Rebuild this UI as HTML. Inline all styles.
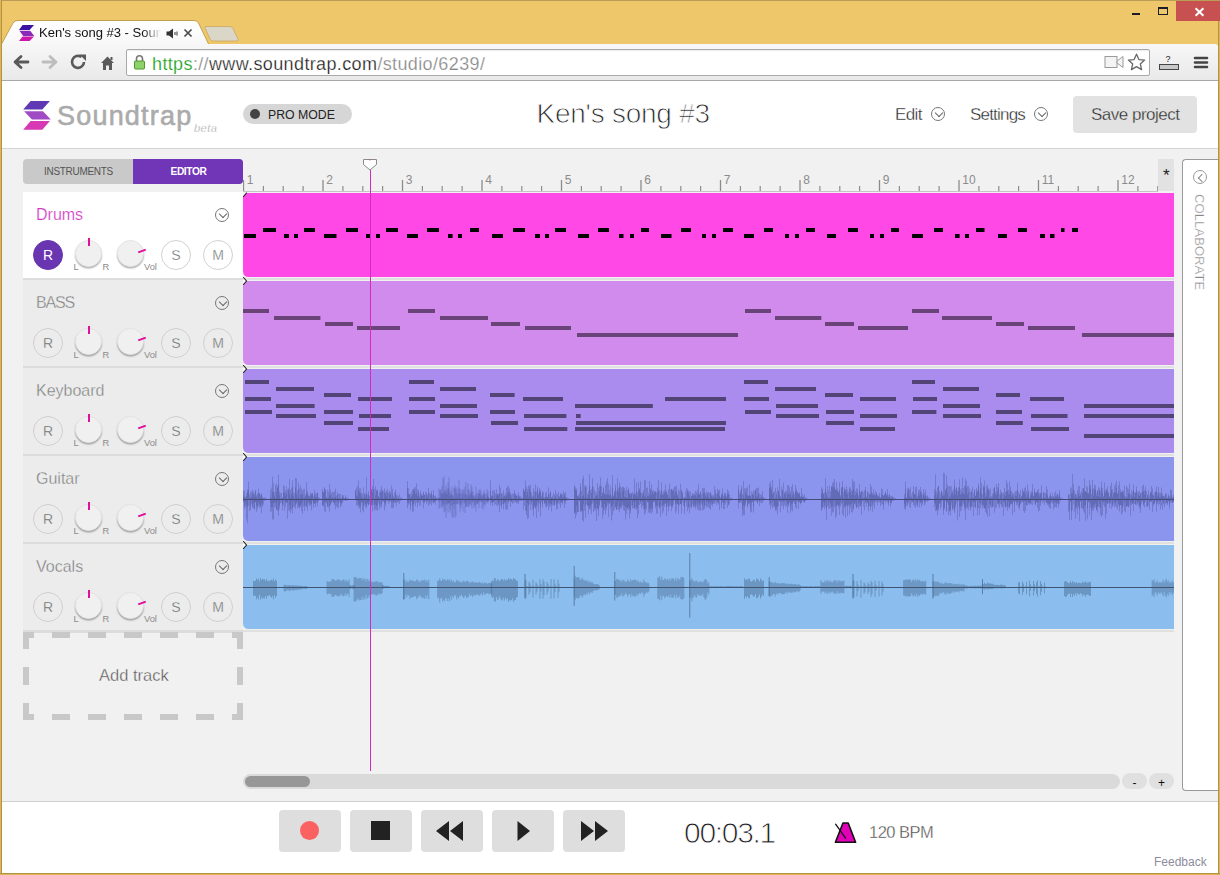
<!DOCTYPE html>
<html><head><meta charset="utf-8">
<style>
*{box-sizing:border-box;margin:0;padding:0}
html,body{width:1220px;height:875px;overflow:hidden}
body{position:relative;background:#efc76b;font-family:"Liberation Sans",sans-serif;color:#333}
.abs{position:absolute}
#topline{left:0;top:0;width:1220px;height:1px;background:#b99c55}
#lb{left:0;top:0;width:2px;height:875px;background:linear-gradient(90deg,#dcb45c 50%,#b4943f 50%)}
/* window controls */
#close{left:1176px;top:1px;width:44px;height:20px;background:#c75050}
#min{left:1132px;top:13px;width:8px;height:2px;background:#1c1c28}
#max{left:1158px;top:7px;width:10px;height:8px;border:1px solid #1c1c28;border-top-width:2px}
/* tabs */
#tab{left:0;top:20px}
#newtab{left:204px;top:25px}
#tabtitle{left:39px;top:25px;font-size:13px;color:#111;white-space:nowrap;width:122px;overflow:hidden}
#toolbar{left:2px;top:44px;width:1216px;height:37px;background:linear-gradient(#f7f7f7,#e9e9e9);border-bottom:1px solid #a8a8a8;border-top-right-radius:3px}
#omni{left:126px;top:49px;width:1024px;height:27px;background:#fff;border:1px solid #a9a9a9;border-radius:2px;box-shadow:inset 0 1px 1px rgba(0,0,0,.08)}
#url{left:152px;top:54px;font-size:18px;letter-spacing:0.37px;white-space:nowrap;color:#1a1a1a;-webkit-text-stroke:.25px #fff}
#url .g{color:#109a10}
#url .l{color:#858585}
/* content */
#content{left:2px;top:81px;width:1216px;height:792px;background:#f1f1f1}
#header{left:2px;top:81px;width:1216px;height:68px;background:#fff;border-bottom:1px solid #d4d4d4}
#brand{left:57px;top:101px;font-size:27px;color:#ababab;letter-spacing:1.2px;-webkit-text-stroke:0.6px #ababab}
#beta{left:194px;top:122px;font-size:11px;font-style:italic;color:#999;letter-spacing:.45px;-webkit-text-stroke:.3px #fff}
#pro{left:243px;top:104px;width:109px;height:20px;background:#d6d6d6;border-radius:10px}
#pro .dot{position:absolute;left:7px;top:5px;width:10px;height:10px;border-radius:50%;background:#444}
#pro .t{position:absolute;left:25px;top:4px;font-size:12.3px;color:#222;white-space:nowrap}
#title{left:536.5px;top:98px;font-size:28px;color:#222;white-space:nowrap;letter-spacing:-.25px;-webkit-text-stroke:0.9px #fff}
.hmenu{font-size:17px;color:#222;white-space:nowrap;top:105px;-webkit-text-stroke:0.35px #fff}
.chev{position:absolute;width:14px;height:14px;border:1px solid #777;border-radius:50%}
.chev:after{content:"";position:absolute;left:3.5px;top:2px;width:5px;height:5px;border-right:1px solid #666;border-bottom:1px solid #666;transform:rotate(45deg)}
#save{left:1073px;top:96px;width:124px;height:37px;background:#e2e2e2;border-radius:4px}
#save span{position:absolute;left:18px;top:8.5px;font-size:17px;color:#222;white-space:nowrap;letter-spacing:-.5px;-webkit-text-stroke:0.35px #e2e2e2}
/* sidebar tabs */
#stabs{left:23px;top:159px;width:220px;height:25px;border-radius:4px;overflow:hidden;background:#c9c9c9}
#stabs .ed{position:absolute;left:110px;top:0;width:110px;height:25px;background:#7135b8}
#stabs .t1{position:absolute;left:21px;top:7px;font-size:10px;color:#555;letter-spacing:-.3px;white-space:nowrap}
#stabs .t2{position:absolute;left:37.5px;top:7px;font-size:10.2px;color:#fff;font-weight:bold;white-space:nowrap;letter-spacing:-.4px}
/* track headers */
.th{position:absolute;left:23px;width:220px;height:85px;background:#ececec}
.th.sel{background:#fff}
.sep{position:absolute;left:23px;width:220px;height:3px;background:#dcdcdc}
.th .name{position:absolute;left:13px;top:14px;font-size:16px;color:#7a7a7a;white-space:nowrap;-webkit-text-stroke:.35px #ececec}
.th.sel .name{-webkit-text-stroke:.2px #fff}
.th.sel .name{color:#d23ac6}
.th .chev{left:192px;top:16px}
.btn{position:absolute;top:48px;width:30px;height:30px;border-radius:50%;border:1px solid #d0d0d0;text-align:center;font-size:14px;line-height:28px;color:#5e5e5e}
.btn.rec{left:10px}
.th .btn{-webkit-text-stroke:.35px #ececec}
.th.sel .btn{-webkit-text-stroke-color:#fff}
.th.sel .btn.rec{-webkit-text-stroke:0}
.btn.s{left:138px}
.btn.m{left:180px}
.sel .btn.rec{background:#6a35b0;border-color:#6a35b0;color:#fff}
.knob{position:absolute;top:48px;width:27px;height:27px;border-radius:50%;background:#f0f0f0;border:1px solid #e4e4e4;box-shadow:0 1.5px 1.5px rgba(0,0,0,.3)}
.knob.pan{left:52px}
.knob.vol{left:94px}
.tick{position:absolute;width:2px;height:8px;background:#e0109c}
.lab{position:absolute;font-size:9.3px;color:#8a8a8a}
/* clips */
.clip{position:absolute;left:243px;width:931px;height:84px;border-radius:0 0 0 8px;overflow:hidden}
.clip svg{position:absolute;left:0;top:0}
.marker{position:absolute;left:242px}
/* ruler */
#ruler{left:243px;top:159px}
#star{left:1158px;top:159px;width:16px;height:32px;background:#e2e2e2}
#star span{position:absolute;left:5px;top:7px;font-size:17px;color:#222}
/* collaborate */
#collab{left:1182px;top:159px;width:38px;height:632px;background:#fff;border:1px solid #9a9a9a;border-right:none;border-radius:4px 0 0 4px}
#collab .c{position:absolute;left:10px;top:10px;width:14px;height:14px;border:1px solid #999;border-radius:50%}
#collab .c:after{content:"";position:absolute;left:4.5px;top:3.5px;width:5px;height:5px;border-left:1px solid #888;border-bottom:1px solid #888;transform:rotate(45deg)}
#collab .v{position:absolute;left:24px;top:34px;font-size:13px;color:#888;-webkit-text-stroke:.3px #fff;white-space:nowrap;transform-origin:0 0;transform:rotate(90deg);letter-spacing:.1px}
/* add track */
#addt{left:99px;top:666px;font-size:16.5px;color:#555;white-space:nowrap;-webkit-text-stroke:.35px #f1f1f1}
/* scrollbar */
#sbar{left:243px;top:774px;width:877px;height:15px;background:#dadada;border-radius:8px}
#thumb{left:245px;top:776px;width:65px;height:11px;background:#979797;border-radius:6px}
.zb{position:absolute;top:773px;width:25px;height:16px;background:#e0e0e0;border-radius:8px;font-size:12px;text-align:center;line-height:20px;color:#111}
#playline{left:370px;top:169px;width:1px;height:602px;background:#d42bbf}
#phead{left:363px;top:159px}
/* footer */
#footer{left:2px;top:801px;width:1216px;height:72px;background:#fff;border-top:1px solid #cfcfcf}
.tb{position:absolute;top:810px;width:62px;height:42px;background:#dedede;border-radius:4px}
#time{left:684px;top:815.5px;font-size:30px;color:#1a1a1a;letter-spacing:-1.3px;white-space:nowrap;-webkit-text-stroke:0.9px #fff}
#bpm{left:869px;top:823px;font-size:16.5px;color:#444;letter-spacing:-.5px;white-space:nowrap;-webkit-text-stroke:.35px #fff}
#feedback{left:1154px;top:855px;font-size:12px;color:#8c8c9c;white-space:nowrap}
#rb{left:1218px;top:21px;width:2px;height:854px;background:linear-gradient(90deg,#b4943f 50%,#dcb45c 50%)}
#bb{left:0;top:873px;width:1220px;height:2px;background:linear-gradient(#b4943f 50%,#dcb45c 50%)}
</style></head><body>
<div class="abs" id="topline"></div>
<div class="abs" id="close"><svg width="44" height="20" style="position:absolute;left:0;top:0"><path d="M19.6 7.2L27.4 14.8M27.4 7.2L19.6 14.8" stroke="#fff" stroke-width="2"/></svg></div>
<div class="abs" id="min"></div>
<div class="abs" id="max"></div>

<svg class="abs" id="tab" width="215" height="25"><defs><linearGradient id="tg" x1="0" y1="0" x2="0" y2="1"><stop offset="0" stop-color="#fff"/><stop offset="1" stop-color="#f7f7f7"/></linearGradient></defs><path d="M1 25 L13 3 Q14.5 0.5 18 0.5 L194 0.5 Q197 0.5 198.5 3 L209 25 Z" fill="url(#tg)" stroke="#c29f4e" stroke-width="1"/></svg>
<svg class="abs" id="newtab" width="36" height="18"><path d="M2 1.5 L26 1.5 Q28 1.5 29 3.5 L34 14 Q35 16 33 16 L9 16 Q7 16 6 14 L1 3 Q0.5 1.5 2 1.5Z" fill="#dbd7c8" stroke="#c9a65a" stroke-width="0.8"/></svg>
<div class="abs" id="toolbar"></div>
<svg class="abs" style="left:18px;top:24px" width="18" height="18"><path d="M4.6 1H16L11.6 5.9H1Z" fill="#3c12a4"/><path d="M1.4 6.8H12.2L16.2 11.9H5.2Z" fill="#8a2ab8"/><path d="M4.6 12.6H16L11.6 17H1Z" fill="#cc16ac"/></svg>
<div class="abs" id="tabtitle" style="-webkit-mask-image:linear-gradient(90deg,#000 85%,transparent)">Ken's song #3 - Soundtrap</div>
<svg class="abs" style="left:166px;top:28px" width="12" height="11"><path d="M0.5 3.5H3L7 0.5V10.5L3 7.5H0.5Z" fill="#333"/><path d="M9 4V7M11 3.5V7.5" stroke="#333" stroke-width="1"/></svg>
<svg class="abs" style="left:183px;top:28px" width="10" height="10"><path d="M1.5 1.5L8.5 8.5M8.5 1.5L1.5 8.5" stroke="#4a4a4a" stroke-width="1.7"/></svg>

<div class="abs" id="omni"></div>
<!-- nav icons -->
<svg class="abs" style="left:11px;top:53px" width="20" height="18"><path d="M17 9H5M10 3.5L4 9L10 14.5" stroke="#595959" stroke-width="2.8" fill="none" stroke-linecap="round" stroke-linejoin="round"/></svg>
<svg class="abs" style="left:40px;top:53px" width="20" height="18"><path d="M3 9H15M10 3.5L16 9L10 14.5" stroke="#bdbdbd" stroke-width="2.8" fill="none" stroke-linecap="round" stroke-linejoin="round"/></svg>
<svg class="abs" style="left:69px;top:53px" width="20" height="18"><path d="M15 9A6 6 0 1 1 12.5 4" stroke="#595959" stroke-width="2.6" fill="none"/><path d="M10.5 1.5L17 1.5L17 8Z" fill="#595959"/></svg>
<svg class="abs" style="left:99px;top:54px" width="18" height="17"><path d="M2 9L8.5 2.5L15 9H13V16H10V11.5H7V16H4V9Z" fill="#595959"/><path d="M12.5 3V6" stroke="#595959" stroke-width="2"/></svg>
<svg class="abs" style="left:133px;top:54px" width="13" height="16"><path d="M3.5 7V4.8A3 3 0 0 1 9.5 4.8V7" stroke="#777" stroke-width="1.6" fill="none"/><rect x="1.5" y="7" width="10" height="8" rx="1" fill="#8fd16a" stroke="#4e9a2e" stroke-width="1"/></svg>
<div class="abs" id="url"><span class="g">https</span><span class="l">://</span>www.soundtrap.com<span class="l">/studio/6239/</span></div>
<svg class="abs" style="left:1104px;top:55px" width="21" height="14"><rect x="1" y="1.5" width="12" height="11" fill="#f4f4f4" stroke="#9a9a9a"/><path d="M13 6L19 1.5V12.5L13 8Z" fill="#f4f4f4" stroke="#9a9a9a"/></svg>
<svg class="abs" style="left:1127px;top:53px" width="20" height="19"><path d="M9.5 1.2L11.9 6.6L17.6 7.1L13.3 10.9L14.6 16.6L9.5 13.6L4.4 16.6L5.7 10.9L1.4 7.1L7.1 6.6Z" fill="#fff" stroke="#666" stroke-width="1.3" stroke-linejoin="round"/></svg>
<svg class="abs" style="left:1157px;top:53px" width="24" height="19"><text x="8.5" y="9" font-size="9" font-family="Liberation Sans" fill="#222">?</text><rect x="2.5" y="11.5" width="19" height="5" fill="#c9c9c9" stroke="#444"/></svg>
<svg class="abs" style="left:1193px;top:55px" width="16" height="15"><path d="M2 3H14M2 7.5H14M2 12H14" stroke="#444" stroke-width="2.6" stroke-linecap="round"/></svg>

<div class="abs" id="content"></div>
<div class="abs" id="header"></div>
<svg class="abs" style="left:23px;top:100px" width="30" height="31"><path d="M7.6 1.1H26.9L19.3 9.6H0.2Z" fill="#6038b4"/><path d="M1.1 11.2H20L27.8 19.6H8.9Z" fill="#a04bc4"/><path d="M7.6 21.1H26.9L19.3 29.7H0.2Z" fill="#d838b4"/></svg>
<div class="abs" id="brand">Soundtrap</div>
<div class="abs" id="beta">beta</div>
<div class="abs" id="pro"><div class="dot"></div><div class="t">PRO MODE</div></div>
<div class="abs" id="title">Ken's song #3</div>
<div class="abs hmenu" style="left:895px;letter-spacing:-.6px">Edit</div>
<div class="chev" style="left:931px;top:107px"></div>
<div class="abs hmenu" style="left:970px;letter-spacing:-.8px">Settings</div>
<div class="chev" style="left:1034px;top:107px"></div>
<div class="abs" id="save"><span>Save project</span></div>

<div class="abs" id="stabs"><div class="t1">INSTRUMENTS</div><div class="ed"><div class="t2">EDITOR</div></div></div>

<div class="th sel" style="top:192px;height:86px">
<div class="name">Drums</div><div class="chev"></div>
<div class="btn rec">R</div>
<div class="knob pan"></div><div class="tick" style="left:65px;top:46px"></div>
<div class="lab" style="left:50.5px;top:70px">L</div><div class="lab" style="left:79.5px;top:70px">R</div>
<div class="knob vol"></div><div class="tick" style="left:118px;top:55px;transform:rotate(70deg)"></div>
<div class="lab" style="left:121px;top:70px">Vol</div>
<div class="btn s">S</div><div class="btn m">M</div>
</div>
<div class="sep" style="top:278px;height:3px"></div><div class="abs" style="left:243px;top:277px;width:931px;height:4px;background:#e0e0e0;border-top:1px solid #eef1ee;border-bottom:1px solid #eef1ee"></div>
<svg class="abs" style="left:242px;top:188px" width="932" height="89"><path d="M1 9 L4.5 5 H932 V89 H7 Q1 89 1 83 Z" fill="#ff48e6"/></svg>
<div class="clip" style="top:193px;background:transparent"><svg class="notes" width="931" height="84" fill="#000"><rect x="1.0" y="41" width="12.0" height="4"/><rect x="41.0" y="41" width="5.0" height="4"/><rect x="51.0" y="41" width="4.0" height="4"/><rect x="81.0" y="41" width="12.5" height="4"/><rect x="123.0" y="41" width="4.5" height="4"/><rect x="133.0" y="41" width="4.0" height="4"/><rect x="164.0" y="41" width="11.0" height="4"/><rect x="205.0" y="41" width="4.6" height="4"/><rect x="215.0" y="41" width="4.0" height="4"/><rect x="249.0" y="41" width="11.0" height="4"/><rect x="292.0" y="41" width="5.0" height="4"/><rect x="302.0" y="41" width="4.0" height="4"/><rect x="335.0" y="41" width="11.0" height="4"/><rect x="376.0" y="41" width="4.5" height="4"/><rect x="387.0" y="41" width="4.0" height="4"/><rect x="418.0" y="41" width="10.5" height="4"/><rect x="459.0" y="41" width="4.0" height="4"/><rect x="469.0" y="41" width="4.0" height="4"/><rect x="501.0" y="41" width="10.0" height="4"/><rect x="542.0" y="41" width="4.0" height="4"/><rect x="552.0" y="41" width="4.0" height="4"/><rect x="584.0" y="41" width="9.0" height="4"/><rect x="627.0" y="41" width="4.0" height="4"/><rect x="637.0" y="41" width="4.0" height="4"/><rect x="669.0" y="41" width="11.0" height="4"/><rect x="712.0" y="41" width="4.6" height="4"/><rect x="722.0" y="41" width="4.0" height="4"/><rect x="755.0" y="41" width="9.0" height="4"/><rect x="797.0" y="41" width="5.0" height="4"/><rect x="807.0" y="41" width="4.5" height="4"/><rect x="20.0" y="35" width="13.0" height="4"/><rect x="61.0" y="35" width="11.0" height="4"/><rect x="103.0" y="35" width="12.0" height="4"/><rect x="143.0" y="35" width="12.0" height="4"/><rect x="184.0" y="35" width="12.0" height="4"/><rect x="227.0" y="35" width="9.0" height="4"/><rect x="270.0" y="35" width="12.0" height="4"/><rect x="312.0" y="35" width="11.0" height="4"/><rect x="355.0" y="35" width="11.0" height="4"/><rect x="398.0" y="35" width="8.0" height="4"/><rect x="438.0" y="35" width="10.0" height="4"/><rect x="480.0" y="35" width="10.0" height="4"/><rect x="521.0" y="35" width="9.0" height="4"/><rect x="563.0" y="35" width="9.0" height="4"/><rect x="605.0" y="35" width="10.0" height="4"/><rect x="648.0" y="35" width="8.0" height="4"/><rect x="691.0" y="35" width="9.0" height="4"/><rect x="733.0" y="35" width="8.5" height="4"/><rect x="775.0" y="35" width="9.0" height="4"/><rect x="818.0" y="35" width="3.5" height="4"/><rect x="829.0" y="35" width="6.0" height="4"/></svg></div>
<svg class="abs" style="left:241px;top:188px" width="8" height="10"><path d="M5.5 5L2.5 8.5" stroke="#1a1a1a" stroke-width="1.1" fill="#fff" stroke-linecap="round"/></svg>
<div class="th" style="top:280px;height:86px">
<div class="name" style="letter-spacing:-1.2px">BASS</div><div class="chev"></div>
<div class="btn rec">R</div>
<div class="knob pan"></div><div class="tick" style="left:65px;top:46px"></div>
<div class="lab" style="left:50.5px;top:70px">L</div><div class="lab" style="left:79.5px;top:70px">R</div>
<div class="knob vol"></div><div class="tick" style="left:118px;top:55px;transform:rotate(70deg)"></div>
<div class="lab" style="left:121px;top:70px">Vol</div>
<div class="btn s">S</div><div class="btn m">M</div>
</div>
<div class="sep" style="top:366px;height:3px"></div><div class="abs" style="left:243px;top:365px;width:931px;height:4px;background:#e0e0e0;border-top:1px solid #eef1ee;border-bottom:1px solid #eef1ee"></div>
<svg class="abs" style="left:242px;top:276px" width="932" height="89"><path d="M1 9 L4.5 5 H932 V89 H7 Q1 89 1 83 Z" fill="#d18bec"/></svg>
<div class="clip" style="top:281px;background:transparent"><svg class="notes" width="931" height="84" fill="#6a4479"><rect x="0.0" y="28" width="26.0" height="4"/><rect x="31.0" y="35" width="46.4" height="4"/><rect x="82.0" y="41" width="28.0" height="4"/><rect x="114.0" y="45" width="43.0" height="4"/><rect x="165.0" y="28" width="27.0" height="4"/><rect x="197.0" y="35" width="48.0" height="4"/><rect x="248.0" y="41" width="29.0" height="4"/><rect x="282.0" y="45" width="46.0" height="4"/><rect x="334.0" y="52" width="161.0" height="4"/><rect x="502.0" y="28" width="26.0" height="4"/><rect x="532.0" y="35" width="46.3" height="4"/><rect x="582.0" y="41" width="29.0" height="4"/><rect x="615.0" y="45" width="50.0" height="4"/><rect x="669.0" y="28" width="27.0" height="4"/><rect x="699.0" y="35" width="50.0" height="4"/><rect x="753.0" y="41" width="28.0" height="4"/><rect x="785.0" y="45" width="47.0" height="4"/><rect x="839.0" y="52" width="92.0" height="4"/></svg></div>
<svg class="abs" style="left:241px;top:276px" width="8" height="10"><path d="M2.5 1.5L5.5 5L2.5 8.5" stroke="#1a1a1a" stroke-width="1.1" fill="#fff" stroke-linecap="round"/></svg>
<div class="th" style="top:368px;height:86px">
<div class="name">Keyboard</div><div class="chev"></div>
<div class="btn rec">R</div>
<div class="knob pan"></div><div class="tick" style="left:65px;top:46px"></div>
<div class="lab" style="left:50.5px;top:70px">L</div><div class="lab" style="left:79.5px;top:70px">R</div>
<div class="knob vol"></div><div class="tick" style="left:118px;top:55px;transform:rotate(70deg)"></div>
<div class="lab" style="left:121px;top:70px">Vol</div>
<div class="btn s">S</div><div class="btn m">M</div>
</div>
<div class="sep" style="top:454px;height:3px"></div><div class="abs" style="left:243px;top:453px;width:931px;height:4px;background:#e0e0e0;border-top:1px solid #eef1ee;border-bottom:1px solid #eef1ee"></div>
<svg class="abs" style="left:242px;top:364px" width="932" height="89"><path d="M1 9 L4.5 5 H932 V89 H7 Q1 89 1 83 Z" fill="#a98cee"/></svg>
<div class="clip" style="top:369px;background:transparent"><svg class="notes" width="931" height="84" fill="#524476"><rect x="2.0" y="11" width="24.0" height="4"/><rect x="2.0" y="28" width="26.0" height="4"/><rect x="2.0" y="41" width="27.0" height="4"/><rect x="33.0" y="18" width="38.0" height="4"/><rect x="33.0" y="35" width="38.6" height="4"/><rect x="33.0" y="45" width="40.0" height="4"/><rect x="81.0" y="24" width="27.0" height="4"/><rect x="81.0" y="41" width="29.0" height="4"/><rect x="81.0" y="52" width="29.0" height="4"/><rect x="115.0" y="28" width="34.0" height="4"/><rect x="116.0" y="45" width="32.0" height="4"/><rect x="115.0" y="58" width="31.0" height="4"/><rect x="166.0" y="11" width="25.0" height="4"/><rect x="166.0" y="28" width="26.0" height="4"/><rect x="166.0" y="41" width="26.0" height="4"/><rect x="197.0" y="18" width="36.0" height="4"/><rect x="197.0" y="35" width="37.0" height="4"/><rect x="197.0" y="45" width="38.0" height="4"/><rect x="247.0" y="24" width="24.6" height="4"/><rect x="247.0" y="41" width="25.0" height="4"/><rect x="248.0" y="52" width="27.0" height="4"/><rect x="280.0" y="28" width="40.0" height="4"/><rect x="281.0" y="45" width="42.4" height="4"/><rect x="281.0" y="58" width="43.3" height="4"/><rect x="332.0" y="35" width="77.8" height="4"/><rect x="333.0" y="45" width="4.7" height="4"/><rect x="333.0" y="52" width="150.0" height="4"/><rect x="332.0" y="58" width="150.0" height="4"/><rect x="422.0" y="28" width="61.0" height="4"/><rect x="501.0" y="11" width="24.0" height="4"/><rect x="501.0" y="28" width="25.0" height="4"/><rect x="502.0" y="41" width="26.0" height="4"/><rect x="532.0" y="18" width="41.0" height="4"/><rect x="533.0" y="35" width="42.0" height="4"/><rect x="533.0" y="45" width="43.0" height="4"/><rect x="582.0" y="24" width="28.0" height="4"/><rect x="583.0" y="41" width="28.0" height="4"/><rect x="583.0" y="52" width="28.0" height="4"/><rect x="617.0" y="28" width="36.0" height="4"/><rect x="617.0" y="45" width="37.0" height="4"/><rect x="617.0" y="58" width="35.0" height="4"/><rect x="669.0" y="11" width="23.0" height="4"/><rect x="670.0" y="28" width="24.0" height="4"/><rect x="669.0" y="41" width="24.4" height="4"/><rect x="700.0" y="18" width="36.0" height="4"/><rect x="700.0" y="35" width="37.0" height="4"/><rect x="700.0" y="45" width="38.0" height="4"/><rect x="753.0" y="24" width="24.0" height="4"/><rect x="753.0" y="41" width="26.0" height="4"/><rect x="753.0" y="52" width="26.8" height="4"/><rect x="787.0" y="28" width="34.0" height="4"/><rect x="788.0" y="45" width="36.5" height="4"/><rect x="788.0" y="58" width="38.0" height="4"/><rect x="841.0" y="35" width="90.0" height="4"/><rect x="841.0" y="45" width="90.0" height="4"/><rect x="841.0" y="65" width="90.0" height="4"/></svg></div>
<svg class="abs" style="left:241px;top:364px" width="8" height="10"><path d="M2.5 1.5L5.5 5L2.5 8.5" stroke="#1a1a1a" stroke-width="1.1" fill="#fff" stroke-linecap="round"/></svg>
<div class="th" style="top:456px;height:86px">
<div class="name">Guitar</div><div class="chev"></div>
<div class="btn rec">R</div>
<div class="knob pan"></div><div class="tick" style="left:65px;top:46px"></div>
<div class="lab" style="left:50.5px;top:70px">L</div><div class="lab" style="left:79.5px;top:70px">R</div>
<div class="knob vol"></div><div class="tick" style="left:118px;top:55px;transform:rotate(70deg)"></div>
<div class="lab" style="left:121px;top:70px">Vol</div>
<div class="btn s">S</div><div class="btn m">M</div>
</div>
<div class="sep" style="top:542px;height:3px"></div><div class="abs" style="left:243px;top:541px;width:931px;height:4px;background:#e0e0e0;border-top:1px solid #eef1ee;border-bottom:1px solid #eef1ee"></div>
<svg class="abs" style="left:242px;top:452px" width="932" height="89"><path d="M1 9 L4.5 5 H932 V89 H7 Q1 89 1 83 Z" fill="#8b95ee"/></svg>
<div class="clip" style="top:457px;background:transparent"><svg class="notes" width="931" height="84"><path d="M0.5 37.9V44.0M1.5 33.7V48.8M2.5 41.8V50.4M3.5 36.3V62.4M4.5 32.3V66.2M5.5 24.5V42.3M6.5 40.8V43.2M7.5 40.4V53.2M8.5 34.9V42.5M9.5 32.7V48.8M10.5 36.9V46.0M11.5 39.9V51.5M12.5 32.9V45.5M13.5 38.0V54.9M14.5 41.9V52.3M15.5 31.8V45.4M16.5 36.6V47.4M17.5 38.2V50.6M18.5 36.5V56.1M19.5 39.5V49.5M20.5 41.3V42.6M27.5 40.3V45.5M28.5 41.1V50.1M29.5 19.5V62.2M30.5 35.0V62.7M31.5 39.4V45.2M32.5 28.2V45.7M33.5 34.9V52.8M34.5 30.7V54.1M35.5 17.6V58.6M36.5 34.5V48.4M37.5 41.4V42.5M38.5 36.0V42.4M39.5 40.9V47.5M40.5 28.5V43.5M41.5 35.6V43.2M42.5 33.1V49.9M43.5 36.3V45.3M44.5 41.9V61.7M45.5 31.4V42.1M46.5 22.0V54.3M47.5 40.0V56.1M48.5 37.0V44.4M49.5 23.2V56.5M50.5 39.1V49.7M51.5 41.8V45.2M52.5 21.1V48.0M53.5 21.5V46.4M54.5 39.8V43.9M55.5 25.5V48.3M56.5 41.3V51.6M57.5 28.5V48.0M58.5 37.8V54.1M59.5 36.6V57.0M60.5 40.9V43.1M61.5 40.7V53.8M62.5 37.8V48.5M63.5 25.1V50.0M64.5 36.7V53.8M65.5 39.6V44.5M66.5 39.5V46.0M67.5 38.3V46.4M68.5 37.4V53.3M69.5 36.0V42.0M70.5 42.0V50.8M71.5 33.1V47.1M72.5 36.1V50.0M73.5 40.2V43.8M74.5 36.4V49.1M79.5 31.9V47.8M80.5 35.5V48.2M81.5 30.2V54.2M82.5 33.5V55.3M83.5 41.0V46.5M84.5 41.5V49.9M85.5 40.7V50.5M86.5 27.2V54.6M87.5 37.3V46.7M88.5 40.7V45.8M89.5 40.4V44.4M90.5 35.2V45.7M91.5 34.2V46.4M92.5 31.5V52.5M93.5 41.8V49.4M94.5 38.0V50.9M95.5 41.1V50.6M96.5 41.6V42.2M97.5 41.7V50.1M98.5 41.7V48.7M99.5 38.5V43.7M100.5 40.4V42.4M101.5 41.6V42.5M102.5 40.3V43.2M112.5 32.5V43.6M113.5 38.4V42.1M114.5 39.6V48.3M115.5 23.4V47.5M116.5 35.4V48.8M117.5 36.6V55.4M118.5 35.3V45.9M119.5 41.4V53.2M120.5 41.3V55.2M121.5 38.1V44.3M122.5 40.3V47.3M123.5 20.3V49.0M124.5 37.7V45.8M125.5 34.2V48.1M126.5 42.0V44.4M127.5 41.7V42.1M128.5 32.0V48.2M129.5 29.0V54.5M130.5 22.0V43.0M131.5 41.7V53.3M132.5 29.2V52.6M133.5 34.5V52.9M134.5 33.0V53.7M135.5 39.6V42.1M136.5 41.2V52.3M137.5 32.6V49.6M138.5 29.1V50.5M139.5 32.4V42.3M140.5 41.6V43.9M141.5 31.2V53.5M142.5 36.2V48.8M143.5 33.5V42.3M144.5 31.9V44.1M145.5 41.7V43.7M146.5 33.6V43.9M147.5 37.1V42.5M148.5 28.6V51.0M149.5 31.9V51.2M150.5 40.5V50.6M151.5 41.2V45.7M152.5 32.8V45.4M153.5 40.5V49.2M154.5 42.0V45.0M155.5 41.3V43.8M156.5 42.0V47.0M164.5 24.0V51.3M165.5 37.0V46.0M166.5 37.3V46.5M167.5 41.2V53.3M168.5 39.3V44.2M169.5 37.3V55.2M170.5 32.3V54.2M171.5 30.6V42.2M172.5 30.1V49.2M173.5 26.4V42.7M174.5 38.9V50.3M175.5 32.8V44.3M176.5 40.7V42.9M177.5 36.1V43.4M178.5 37.0V42.7M179.5 38.7V42.4M180.5 35.4V51.2M181.5 37.9V46.3M182.5 41.7V43.7M183.5 37.0V47.1M184.5 40.0V43.3M185.5 30.7V49.2M186.5 41.9V47.4M187.5 36.7V42.0M188.5 33.9V48.4M189.5 41.5V42.6M190.5 33.2V46.6M191.5 39.0V45.0M192.5 40.9V47.7M196.0 40.6V45.2M197.0 40.8V42.5M198.0 35.4V44.7M199.0 37.4V49.3M200.0 21.5V49.6M201.0 19.1V55.1M202.0 32.9V54.2M203.0 28.5V60.8M204.0 36.8V48.2M205.0 25.0V55.5M206.0 19.9V46.0M207.0 39.2V55.7M208.0 33.5V43.9M209.0 29.4V60.3M210.0 39.5V60.7M211.0 41.6V47.2M212.0 28.1V60.9M213.0 40.0V59.0M214.0 30.2V46.7M215.0 40.3V42.0M216.0 22.9V43.0M217.0 37.3V55.4M218.0 41.7V48.1M219.0 40.1V46.2M220.0 36.5V54.5M221.0 41.8V42.3M222.0 29.7V56.0M223.0 25.0V50.1M224.0 38.4V44.6M225.0 26.6V50.1M226.0 39.8V47.3M227.0 37.6V44.1M228.0 27.2V43.3M229.0 29.8V51.8M230.0 38.8V45.3M231.0 40.4V51.1M232.0 41.9V47.7M233.0 29.7V54.6M234.0 41.5V46.7M235.0 40.2V45.6M236.0 33.0V51.4M237.0 31.7V44.1M238.0 33.7V43.2M239.0 41.1V51.2M240.0 38.7V52.4M241.0 33.4V47.6M242.0 38.0V49.5M243.0 41.9V43.7M244.0 32.0V46.3M245.0 33.8V44.9M247.5 23.5V42.6M248.5 39.7V45.7M249.5 39.1V49.2M250.5 42.0V45.0M251.5 38.2V43.5M252.5 41.6V42.6M253.5 32.1V42.5M254.5 36.8V44.3M255.5 38.5V48.1M256.5 27.7V55.1M257.5 30.9V43.4M258.5 36.9V51.6M259.5 36.4V43.0M260.5 33.4V52.6M261.5 38.1V46.5M262.5 35.8V52.3M263.5 31.0V52.7M264.5 28.6V52.5M265.5 29.4V44.8M266.5 31.6V42.8M267.5 38.3V49.8M268.5 40.5V44.7M269.5 41.3V43.3M270.5 41.9V46.0M271.5 33.1V42.4M272.5 36.3V43.6M273.5 38.8V46.4M274.5 41.9V45.8M275.5 35.5V47.0M276.5 38.8V42.3M277.5 41.7V44.0M280.5 31.4V42.7M281.5 34.2V42.4M282.5 23.6V43.3M283.5 29.3V58.2M284.5 34.8V62.1M285.5 28.2V61.2M286.5 29.1V43.6M287.5 27.8V43.4M288.5 39.9V45.2M289.5 41.8V43.9M290.5 31.4V59.1M291.5 41.1V50.1M292.5 27.4V50.6M293.5 41.3V61.0M294.5 29.5V44.9M295.5 37.9V54.8M296.5 31.0V42.3M297.5 33.2V59.6M298.5 38.8V42.0M299.5 34.0V47.4M300.5 41.1V44.2M301.5 42.0V45.9M302.5 40.2V49.8M303.5 34.4V47.7M304.5 40.0V43.1M305.5 30.4V53.0M306.5 42.0V50.2M307.5 34.7V46.7M308.5 40.1V54.5M309.5 38.4V43.9M310.5 42.0V48.0M311.5 40.7V48.7M312.5 33.1V43.1M313.5 41.8V52.7M314.5 42.0V51.7M315.5 34.9V45.9M316.5 40.6V42.1M317.5 35.9V50.8M318.5 37.7V45.4M319.5 40.5V47.6M320.5 34.4V42.0M321.5 36.2V50.9M322.5 35.0V43.9M331.5 27.8V57.0M332.5 32.6V61.6M333.5 33.5V57.9M334.5 38.9V54.8M335.5 40.2V42.2M336.5 36.0V43.6M337.5 26.0V55.1M338.5 41.4V53.8M339.5 21.8V63.0M340.5 18.5V64.7M341.5 40.8V42.2M342.5 28.0V60.7M343.5 40.9V42.9M344.5 36.7V49.3M345.5 37.5V57.2M346.5 17.1V51.3M347.5 41.8V49.0M348.5 36.1V56.8M349.5 20.9V42.8M350.5 42.0V44.6M351.5 42.0V50.8M352.5 39.6V50.9M353.5 38.1V64.0M354.5 26.4V51.0M355.5 41.2V59.0M356.5 28.7V47.6M357.5 20.4V42.8M358.5 39.2V45.6M359.5 35.5V61.7M360.5 31.6V57.7M361.5 36.3V46.9M362.5 28.0V57.3M363.5 24.6V52.7M364.5 21.1V45.1M365.5 26.9V60.1M366.5 38.5V46.8M367.5 36.8V44.2M368.5 41.0V63.5M369.5 18.1V58.4M370.5 39.5V54.0M371.5 35.6V42.2M372.5 27.5V50.5M373.5 40.4V53.0M374.5 21.1V48.8M375.5 34.9V44.8M376.5 25.4V55.4M377.5 29.3V49.3M378.5 41.1V48.5M379.5 29.7V45.1M380.5 30.0V48.2M381.5 39.8V53.9M382.5 33.5V62.7M383.5 40.2V57.2M384.5 41.1V51.8M385.5 33.0V53.3M386.5 35.4V61.6M387.5 35.9V56.4M388.5 36.7V42.4M389.5 41.9V48.2M390.5 36.8V45.2M391.5 21.5V50.4M392.5 36.0V44.3M393.5 25.5V52.8M394.5 39.3V61.4M395.5 25.4V57.3M396.5 32.6V43.1M397.5 24.7V45.2M398.5 35.5V43.9M399.5 38.4V44.8M400.5 35.5V52.5M401.5 22.8V57.8M402.5 23.6V55.9M403.5 30.9V42.1M404.5 30.4V44.8M405.5 39.3V55.5M406.5 24.0V55.9M407.5 31.7V55.5M408.5 27.3V56.9M409.5 33.6V54.4M410.5 33.1V44.9M411.5 34.5V42.4M412.5 34.6V49.0M413.5 42.0V56.5M414.5 30.8V56.4M415.5 23.3V42.5M416.5 41.9V51.1M417.5 37.9V59.6M418.5 25.3V42.2M419.5 37.8V56.5M420.5 34.2V54.3M421.5 36.3V49.7M422.5 27.4V46.9M423.5 34.7V58.8M424.5 38.0V45.5M425.5 32.1V54.3M426.5 26.4V49.3M427.5 42.0V43.7M428.5 31.8V54.1M429.5 32.8V50.7M430.5 31.5V43.9M431.5 29.7V42.7M432.5 29.6V56.5M433.5 28.6V53.7M434.5 38.7V46.9M435.5 32.6V56.7M436.5 41.8V42.8M437.5 26.7V47.1M438.5 33.8V56.5M439.5 37.1V42.6M440.5 40.8V42.0M441.5 41.1V56.8M442.5 41.1V42.1M443.5 31.3V43.5M444.5 31.8V54.2M445.5 33.5V51.3M446.5 39.6V56.2M447.5 42.0V50.1M448.5 38.9V51.4M449.5 36.3V42.3M450.5 37.1V50.4M451.5 38.2V49.8M452.5 38.0V52.2M453.5 35.1V44.5M454.5 32.8V52.7M455.5 27.5V52.7M456.5 37.5V53.6M457.5 34.8V53.7M458.5 42.0V44.1M459.5 31.1V53.3M460.5 31.3V52.9M461.5 30.7V51.8M462.5 38.8V42.4M463.5 40.5V50.6M464.5 35.1V49.4M465.5 40.0V50.5M466.5 41.6V51.3M467.5 35.7V52.7M468.5 37.3V47.9M469.5 40.8V49.4M470.5 38.3V46.8M471.5 29.1V45.0M472.5 32.8V42.9M473.5 36.9V42.1M474.5 31.8V46.2M475.5 33.3V45.5M476.5 32.7V52.8M477.5 40.7V43.0M478.5 36.7V51.2M479.5 31.6V42.2M480.5 41.4V52.3M481.5 35.8V52.1M482.5 38.3V42.8M483.5 40.6V42.1M484.5 32.3V51.0M485.5 34.1V48.3M486.5 41.8V42.7M495.5 28.1V45.7M496.5 41.0V46.1M497.5 33.6V43.6M498.5 28.6V42.0M499.5 41.8V59.0M500.5 23.8V57.7M501.5 41.2V58.3M502.5 35.0V45.9M503.5 31.2V43.1M504.5 29.4V49.3M505.5 38.9V46.7M506.5 27.1V45.4M507.5 38.3V55.3M508.5 41.7V54.7M509.5 35.9V44.5M510.5 38.0V55.6M511.5 41.4V44.3M512.5 32.2V44.3M513.5 31.2V44.7M514.5 31.2V46.7M515.5 30.4V43.3M516.5 40.9V49.2M517.5 41.7V42.3M518.5 40.2V43.0M519.5 34.3V46.0M526.5 26.5V47.7M527.5 24.2V46.3M528.5 33.2V42.1M529.5 22.7V45.1M530.5 36.3V43.5M531.5 42.0V49.6M532.5 40.8V53.8M533.5 37.5V53.5M534.5 41.6V57.1M535.5 33.5V49.4M536.5 21.7V44.2M537.5 39.0V55.1M538.5 29.6V43.7M539.5 32.7V48.8M540.5 25.7V52.3M541.5 34.8V48.1M542.5 36.6V43.0M543.5 40.7V49.1M544.5 28.1V55.8M545.5 28.1V48.0M546.5 29.9V45.2M547.5 36.7V55.7M548.5 29.7V52.8M549.5 27.0V54.1M550.5 33.8V45.1M551.5 37.3V46.8M552.5 28.0V50.5M553.5 31.5V51.9M554.5 34.7V43.8M555.5 36.4V51.8M556.5 36.9V45.3M557.5 39.7V47.5M558.5 31.1V45.8M559.5 37.4V42.6M560.5 40.1V44.5M561.5 41.7V45.6M578.5 30.2V54.0M579.5 33.2V51.5M580.5 37.0V45.0M581.5 35.3V52.3M582.5 21.2V44.9M583.5 37.6V63.2M584.5 40.1V42.5M585.5 41.5V47.7M586.5 40.9V44.6M587.5 40.2V46.6M588.5 29.4V58.7M589.5 25.9V55.8M590.5 24.6V54.8M591.5 22.0V42.0M592.5 32.9V61.4M593.5 25.0V58.8M594.5 34.2V48.7M595.5 35.7V50.8M596.5 25.2V57.8M597.5 39.8V45.7M598.5 31.2V42.6M599.5 24.0V57.1M600.5 35.1V58.8M601.5 31.9V49.1M602.5 32.6V60.8M603.5 29.0V47.0M604.5 37.0V59.2M605.5 41.2V46.6M606.5 32.1V57.2M607.5 35.3V51.3M608.5 33.4V55.4M609.5 21.8V55.5M610.5 24.4V52.3M611.5 24.8V47.1M612.5 34.1V48.5M613.5 31.6V50.3M614.5 31.6V42.2M615.5 38.3V51.8M616.5 26.9V49.7M617.5 34.9V49.0M618.5 34.3V57.8M619.5 41.0V43.2M620.5 41.3V43.3M621.5 32.9V53.3M622.5 29.7V45.1M623.5 40.5V44.3M624.5 33.9V45.3M625.5 41.7V54.3M626.5 36.7V49.3M627.5 27.0V53.2M628.5 29.7V44.6M629.5 36.0V54.6M630.5 32.1V43.6M631.5 36.4V51.5M632.5 38.4V43.2M633.5 35.3V42.6M634.5 37.9V42.3M635.5 38.7V43.7M636.5 40.1V42.1M637.5 41.0V49.3M638.5 31.4V42.7M639.5 32.1V42.9M640.5 38.6V52.5M641.5 37.1V43.4M642.5 34.2V43.6M643.5 39.0V43.5M644.5 32.0V42.5M645.5 40.1V48.9M646.5 36.8V43.9M647.5 41.0V49.6M648.5 41.5V46.1M649.5 40.0V42.2M661.5 40.9V52.0M662.5 24.7V53.1M663.5 40.9V44.6M664.5 31.2V45.6M665.5 30.6V44.1M666.5 32.4V43.4M667.5 30.3V51.0M668.5 40.6V43.5M669.5 41.8V44.7M670.5 29.0V48.1M671.5 37.0V49.6M672.5 29.9V50.8M673.5 29.9V48.0M674.5 41.3V50.4M675.5 32.6V42.4M676.5 33.0V50.3M677.5 30.0V45.1M678.5 33.9V49.6M679.5 41.8V47.7M680.5 32.0V42.5M681.5 35.6V48.2M682.5 32.5V46.2M683.5 41.8V43.8M684.5 40.3V42.4M691.5 38.4V45.3M692.5 17.4V47.5M693.5 40.3V52.7M694.5 30.4V58.3M695.5 28.9V50.1M696.5 40.7V46.2M697.5 41.5V46.0M698.5 33.3V43.1M699.5 35.6V43.9M700.5 15.8V57.7M701.5 16.3V52.5M702.5 33.8V44.3M703.5 18.7V54.6M704.5 27.6V45.4M705.5 41.8V58.2M706.5 39.5V54.3M707.5 39.9V58.4M708.5 36.6V44.2M709.5 35.6V51.9M710.5 38.5V42.3M711.5 22.7V55.9M712.5 32.5V50.6M713.5 30.2V42.7M714.5 33.9V63.5M715.5 34.1V44.2M716.5 22.4V59.9M717.5 37.7V54.4M718.5 36.6V49.0M719.5 20.5V43.8M720.5 31.0V47.0M721.5 37.0V49.4M722.5 22.1V62.9M723.5 23.9V42.4M724.5 37.6V51.8M725.5 28.9V45.9M726.5 41.8V44.1M727.5 41.2V53.8M728.5 35.0V50.7M729.5 40.9V43.9M730.5 40.9V59.0M731.5 32.4V45.0M732.5 39.1V51.5M733.5 31.0V42.6M734.5 34.7V58.6M735.5 26.5V43.0M736.5 41.1V57.6M737.5 20.6V51.0M738.5 26.2V42.4M739.5 41.9V51.6M740.5 28.3V48.0M741.5 23.7V50.8M742.5 40.2V55.0M743.5 29.2V56.9M744.5 27.8V59.9M745.5 31.3V42.8M746.5 41.0V59.1M747.5 39.9V48.1M748.5 41.0V42.1M749.5 40.0V50.2M750.5 36.6V43.2M751.5 29.6V55.7M752.5 37.4V43.3M753.5 26.9V42.2M754.5 30.1V46.9M755.5 26.0V46.9M756.5 41.5V45.8M757.5 32.5V42.2M758.5 35.1V50.2M759.5 42.0V50.2M760.5 35.4V59.1M761.5 30.9V44.8M762.5 39.0V49.8M763.5 23.0V42.2M764.5 26.3V53.8M765.5 37.4V44.8M766.5 24.8V51.7M767.5 29.8V48.4M768.5 34.0V46.6M769.5 38.2V58.0M770.5 39.5V44.1M771.5 42.0V55.2M772.5 33.9V45.0M773.5 38.7V45.0M774.5 25.9V45.5M775.5 41.5V43.4M776.5 37.9V52.7M777.5 41.6V47.5M778.5 39.5V42.1M779.5 31.7V43.8M780.5 33.8V54.1M781.5 31.3V55.9M782.5 29.8V54.1M783.5 40.4V48.0M784.5 27.6V43.6M785.5 33.3V46.0M786.5 41.7V46.1M787.5 38.6V47.2M788.5 36.7V42.0M789.5 27.0V42.2M790.5 38.8V42.5M791.5 31.6V42.5M792.5 35.8V48.3M793.5 34.8V44.8M794.5 33.0V50.9M795.5 32.0V54.4M796.5 36.3V53.6M797.5 37.0V48.9M798.5 28.3V43.6M799.5 41.9V42.7M800.5 36.0V43.1M801.5 41.1V43.1M802.5 41.0V42.1M803.5 29.2V46.4M804.5 32.5V45.9M805.5 41.4V49.4M806.5 38.5V51.1M807.5 38.4V51.8M808.5 40.5V43.6M809.5 40.4V43.2M810.5 39.8V52.5M811.5 41.1V50.5M812.5 34.2V49.9M813.5 37.8V50.7M814.5 36.5V45.3M815.5 40.7V50.3M816.5 33.1V42.9M825.5 37.2V42.1M826.5 42.0V63.1M827.5 41.0V44.0M828.5 36.3V63.2M829.5 17.0V42.2M830.5 26.7V42.2M831.5 34.1V43.0M832.5 36.9V61.7M833.5 40.4V49.2M834.5 40.3V57.3M835.5 36.1V50.7M836.5 39.1V64.2M837.5 37.9V44.1M838.5 41.7V51.0M839.5 36.0V42.0M840.5 31.4V51.9M841.5 21.6V56.3M842.5 34.7V63.8M843.5 35.0V43.5M844.5 29.9V62.2M845.5 35.8V45.0M846.5 23.0V57.8M847.5 27.6V46.6M848.5 37.3V63.2M849.5 23.0V50.5M850.5 38.9V53.4M851.5 27.4V47.9M852.5 28.5V46.4M853.5 39.2V52.8M854.5 33.9V55.5M855.5 39.2V43.4M856.5 32.8V50.6M857.5 40.1V57.9M858.5 24.7V59.8M859.5 36.2V58.0M860.5 40.4V45.0M861.5 25.7V50.2M862.5 36.0V62.2M863.5 34.2V56.7M864.5 29.3V46.9M865.5 36.6V46.4M866.5 39.7V51.0M867.5 28.6V45.2M868.5 25.6V42.7M869.5 39.8V47.8M870.5 36.8V42.2M871.5 29.1V45.5M872.5 26.7V46.4M873.5 23.7V43.9M874.5 36.9V52.6M875.5 28.4V46.8M876.5 24.7V54.5M877.5 35.3V48.2M878.5 35.1V57.4M879.5 34.4V55.7M880.5 36.6V42.2M881.5 28.7V54.3M882.5 41.5V55.3M883.5 29.3V49.8M884.5 30.4V48.2M885.5 36.5V50.1M886.5 26.8V43.1M887.5 42.0V58.6M888.5 38.4V44.5M889.5 35.0V46.9M890.5 27.5V54.0M891.5 40.1V42.3M892.5 36.1V47.9M893.5 29.4V43.7M894.5 41.7V45.1M895.5 34.4V45.2M896.5 39.0V51.6M897.5 36.5V55.9M898.5 41.7V46.7M899.5 28.8V42.4M900.5 27.7V48.6M901.5 32.9V50.5M902.5 29.7V43.0M903.5 41.4V42.5M904.5 37.5V49.9M905.5 33.0V43.0M906.5 41.8V52.8M907.5 35.0V44.8M908.5 29.1V44.8M909.5 31.4V55.0M910.5 38.3V49.1M911.5 41.5V46.5M912.5 33.9V42.6M913.5 29.7V54.6M914.5 39.6V44.9M915.5 29.9V42.4M916.5 35.6V47.2M917.5 39.9V52.3M918.5 30.5V42.1M919.5 39.2V52.8M920.5 39.3V45.8M921.5 40.9V50.1M922.5 36.6V42.4M923.5 36.2V45.7M924.5 41.6V47.9M925.5 39.3V44.7M926.5 41.1V51.6M927.5 32.8V45.7M928.5 32.8V42.5M929.5 41.5V45.4M930.5 37.9V44.4" stroke="#3f4585" stroke-opacity="0.32" stroke-width="1" fill="none"/><path d="M0.5 33.5V45.2M1.5 40.0V52.1M2.5 39.8V45.5M3.5 39.0V48.0M4.5 34.6V50.2M5.5 32.9V48.6M6.5 37.2V54.0M7.5 34.8V49.3M8.5 40.3V46.9M9.5 37.6V50.9M10.5 34.6V51.6M11.5 36.5V52.5M12.5 34.3V45.0M13.5 39.6V48.8M14.5 36.0V49.1M15.5 36.6V48.9M16.5 36.3V50.6M17.5 40.9V48.8M18.5 37.0V45.7M19.5 41.5V46.6M20.5 41.1V47.7M21.5 40.0V44.0M22.5 40.7V43.3M23.5 41.3V42.7M27.5 32.6V54.7M28.5 30.5V54.7M29.5 34.4V50.0M30.5 26.2V46.3M31.5 35.3V50.7M32.5 41.4V49.9M33.5 26.6V52.6M34.5 29.6V44.3M35.5 27.7V53.3M36.5 38.1V51.8M37.5 36.1V46.3M38.5 41.9V46.0M39.5 40.4V53.4M40.5 35.6V48.5M41.5 28.9V54.0M42.5 38.7V45.0M43.5 29.4V45.9M44.5 32.5V45.7M45.5 32.6V53.3M46.5 36.0V48.2M47.5 32.9V51.6M48.5 30.4V52.8M49.5 30.6V51.0M50.5 35.2V43.3M51.5 36.4V50.3M52.5 30.2V52.1M53.5 37.1V46.1M54.5 33.1V51.2M55.5 33.0V50.4M56.5 31.3V50.2M57.5 38.0V50.0M58.5 31.3V47.2M59.5 33.2V45.1M60.5 32.2V49.6M61.5 31.9V48.6M62.5 39.1V42.6M63.5 35.4V49.7M64.5 33.6V45.1M65.5 38.1V47.6M66.5 39.4V49.0M67.5 35.7V48.8M68.5 36.4V46.8M69.5 37.0V44.5M70.5 39.2V46.2M71.5 38.1V46.3M72.5 40.1V46.4M73.5 35.9V46.0M74.5 35.5V45.5M75.5 40.0V44.0M76.5 40.7V43.3M77.5 41.3V42.7M79.5 34.6V48.6M80.5 35.0V49.9M81.5 31.6V45.6M82.5 32.5V44.4M83.5 39.9V45.3M84.5 33.2V49.1M85.5 34.3V44.3M86.5 38.1V49.0M87.5 32.6V48.3M88.5 35.8V45.6M89.5 34.7V42.6M90.5 41.2V45.3M91.5 40.4V48.2M92.5 39.9V44.7M93.5 38.5V43.7M94.5 35.4V44.5M95.5 36.9V46.3M96.5 36.6V45.0M97.5 37.1V46.2M98.5 40.8V46.2M99.5 37.9V46.2M100.5 38.3V43.7M101.5 41.1V43.5M102.5 38.0V43.7M103.5 40.0V44.0M104.5 40.7V43.3M105.5 41.3V42.7M112.5 34.7V42.9M113.5 30.6V48.9M114.5 28.9V44.6M115.5 33.1V50.7M116.5 31.3V51.5M117.5 31.2V49.3M118.5 39.7V44.8M119.5 36.3V45.2M120.5 30.2V49.3M121.5 35.9V47.7M122.5 36.4V50.9M123.5 36.7V50.8M124.5 41.8V47.0M125.5 37.4V47.8M126.5 39.2V47.0M127.5 36.2V45.5M128.5 32.2V48.5M129.5 35.5V46.2M130.5 32.7V48.2M131.5 31.7V48.0M132.5 38.7V47.3M133.5 32.6V48.9M134.5 33.7V48.1M135.5 38.9V46.0M136.5 34.9V47.5M137.5 35.5V42.2M138.5 35.6V46.8M139.5 34.1V45.0M140.5 34.3V44.6M141.5 36.0V45.7M142.5 34.4V46.8M143.5 39.3V44.7M144.5 36.0V42.4M145.5 35.5V46.8M146.5 36.6V45.6M147.5 34.7V44.1M148.5 41.3V45.4M149.5 37.4V44.4M150.5 39.2V45.7M151.5 35.3V43.5M152.5 35.8V45.9M153.5 37.8V42.5M154.5 38.2V44.2M155.5 39.0V45.9M156.5 36.8V43.2M157.5 40.0V44.0M158.5 40.7V43.3M159.5 41.3V42.7M164.5 31.7V45.9M165.5 31.1V48.0M166.5 37.0V43.3M167.5 37.0V49.7M168.5 35.0V44.9M169.5 32.4V48.8M170.5 32.2V47.3M171.5 33.7V46.6M172.5 37.4V43.2M173.5 35.9V45.8M174.5 32.8V45.1M175.5 35.6V45.9M176.5 38.5V48.3M177.5 33.8V48.5M178.5 38.9V43.5M179.5 38.5V44.7M180.5 35.3V45.5M181.5 37.7V45.0M182.5 34.7V43.6M183.5 35.4V44.2M184.5 38.0V45.2M185.5 35.9V42.5M186.5 36.0V45.1M187.5 38.5V46.4M188.5 36.3V43.9M189.5 38.2V45.3M190.5 37.9V45.4M191.5 41.3V45.2M192.5 38.4V43.7M193.5 40.0V44.0M194.5 40.7V43.3M195.5 41.3V42.7M196.0 31.5V51.8M197.0 32.7V50.7M198.0 32.0V42.8M199.0 28.8V51.1M200.0 36.4V47.1M201.0 35.4V43.2M202.0 34.1V47.1M203.0 36.6V43.5M204.0 31.7V46.3M205.0 33.5V46.4M206.0 30.7V46.6M207.0 36.0V52.7M208.0 36.9V48.5M209.0 38.1V48.2M210.0 38.2V43.8M211.0 30.8V51.8M212.0 30.7V47.3M213.0 32.2V43.3M214.0 35.6V47.2M215.0 36.7V47.3M216.0 31.1V45.8M217.0 32.2V47.9M218.0 36.0V51.1M219.0 32.0V43.2M220.0 33.1V43.4M221.0 32.2V46.0M222.0 36.7V46.1M223.0 37.5V49.2M224.0 41.7V49.3M225.0 32.7V42.9M226.0 32.8V50.0M227.0 36.4V47.3M228.0 34.1V48.6M229.0 35.5V46.0M230.0 34.5V43.7M231.0 38.4V43.4M232.0 37.8V49.2M233.0 38.4V43.6M234.0 35.6V46.3M235.0 36.3V47.3M236.0 36.2V43.8M237.0 36.9V45.5M238.0 39.0V44.7M239.0 37.1V45.1M240.0 37.6V44.4M241.0 35.7V43.4M242.0 36.4V47.1M243.0 40.3V43.9M244.0 36.5V44.8M245.0 39.5V46.2M245.1 40.0V44.0M246.1 40.7V43.3M247.1 41.3V42.7M247.5 33.9V48.2M248.5 38.6V45.2M249.5 33.6V45.1M250.5 33.5V44.9M251.5 32.8V47.5M252.5 36.0V47.4M253.5 38.5V48.2M254.5 37.0V49.3M255.5 36.7V46.4M256.5 36.7V44.7M257.5 41.6V48.7M258.5 36.6V48.5M259.5 41.3V46.8M260.5 39.9V47.0M261.5 39.3V45.0M262.5 39.8V46.1M263.5 38.9V43.8M264.5 36.8V43.0M265.5 34.7V46.4M266.5 35.5V44.3M267.5 35.5V44.0M268.5 37.3V45.0M269.5 36.4V46.8M270.5 36.5V42.7M271.5 37.4V45.3M272.5 38.4V45.3M273.5 38.5V44.6M274.5 38.4V43.7M275.5 38.7V43.4M276.5 40.6V44.2M277.5 38.9V42.5M278.5 40.0V44.0M279.5 40.7V43.3M280.5 41.3V42.7M280.5 32.9V52.4M281.5 34.7V48.7M282.5 32.1V53.9M283.5 38.0V53.7M284.5 31.8V46.0M285.5 39.9V48.2M286.5 32.2V47.3M287.5 35.1V52.9M288.5 35.2V47.7M289.5 38.6V52.7M290.5 38.6V51.5M291.5 34.5V47.9M292.5 35.0V51.9M293.5 34.7V48.0M294.5 32.6V49.5M295.5 36.3V45.6M296.5 33.9V46.4M297.5 35.5V49.8M298.5 40.8V45.1M299.5 36.2V51.0M300.5 35.4V43.0M301.5 39.8V47.0M302.5 36.0V45.5M303.5 39.6V50.5M304.5 40.1V48.6M305.5 37.5V45.8M306.5 36.6V46.4M307.5 34.9V48.8M308.5 40.9V47.4M309.5 40.7V48.7M310.5 35.4V44.3M311.5 37.6V47.6M312.5 38.8V45.5M313.5 36.5V47.7M314.5 36.9V46.3M315.5 39.6V43.7M316.5 39.0V47.3M317.5 37.5V44.8M318.5 37.3V46.0M319.5 36.9V44.3M320.5 39.8V44.3M321.5 38.0V44.7M322.5 40.1V46.8M323.5 40.0V44.0M324.5 40.7V43.3M325.5 41.3V42.7M331.5 30.4V55.6M332.5 30.0V54.5M333.5 31.4V48.8M334.5 38.8V55.0M335.5 38.1V55.1M336.5 40.2V44.0M337.5 30.1V53.3M338.5 34.0V54.1M339.5 39.1V54.5M340.5 38.2V47.2M341.5 28.8V53.9M342.5 30.9V48.4M343.5 29.7V47.2M344.5 40.6V47.9M345.5 34.1V48.8M346.5 28.9V52.0M347.5 33.3V53.4M348.5 32.1V47.3M349.5 29.3V46.6M350.5 29.9V55.0M351.5 32.7V53.5M352.5 34.5V53.8M353.5 35.4V47.2M354.5 38.2V52.0M355.5 30.7V53.3M356.5 33.9V49.4M357.5 29.0V43.4M358.5 28.9V50.5M359.5 36.2V50.1M360.5 30.3V51.9M361.5 37.5V53.5M362.5 37.3V49.8M363.5 38.0V50.0M364.5 36.9V48.2M365.5 37.6V46.1M366.5 32.8V46.2M367.5 28.7V52.4M368.5 38.6V49.0M369.5 30.9V49.5M370.5 38.5V46.8M371.5 34.3V52.7M372.5 31.9V49.8M373.5 34.3V52.2M374.5 32.6V52.3M375.5 31.2V53.3M376.5 30.1V51.6M377.5 35.5V51.1M378.5 30.8V51.8M379.5 34.3V49.5M380.5 31.8V53.4M381.5 31.0V48.7M382.5 40.2V50.2M383.5 29.7V49.9M384.5 33.2V51.6M385.5 30.7V49.9M386.5 37.1V51.3M387.5 38.5V53.5M388.5 36.3V48.6M389.5 34.6V51.2M390.5 37.0V51.5M391.5 37.1V52.0M392.5 38.4V51.7M393.5 34.3V50.0M394.5 35.5V50.6M395.5 34.4V47.4M396.5 31.2V48.0M397.5 35.4V46.9M398.5 41.7V51.0M399.5 36.2V49.0M400.5 32.8V47.9M401.5 39.9V51.7M402.5 38.4V51.7M403.5 41.2V52.4M404.5 39.1V45.3M405.5 35.9V45.4M406.5 38.1V51.9M407.5 33.1V51.8M408.5 37.7V50.4M409.5 35.2V51.6M410.5 37.3V45.2M411.5 35.0V45.2M412.5 34.4V51.4M413.5 35.0V49.2M414.5 35.9V48.0M415.5 33.7V49.7M416.5 33.4V51.6M417.5 34.8V48.4M418.5 33.2V49.5M419.5 36.2V48.3M420.5 37.9V47.9M421.5 32.6V46.6M422.5 35.1V46.4M423.5 34.0V50.3M424.5 37.0V48.9M425.5 40.5V49.8M426.5 40.3V46.6M427.5 32.4V48.9M428.5 32.5V48.9M429.5 34.0V48.8M430.5 34.2V47.7M431.5 38.5V43.3M432.5 34.4V47.0M433.5 35.1V46.0M434.5 37.1V47.4M435.5 40.3V48.3M436.5 33.6V48.3M437.5 41.3V47.0M438.5 32.7V47.6M439.5 34.8V45.4M440.5 41.6V48.8M441.5 39.9V49.8M442.5 34.5V45.6M443.5 40.5V49.2M444.5 34.6V43.9M445.5 36.4V49.9M446.5 34.7V42.6M447.5 34.2V43.8M448.5 39.0V49.4M449.5 37.3V47.7M450.5 39.3V48.9M451.5 35.5V46.7M452.5 33.8V48.8M453.5 40.4V49.6M454.5 37.7V47.7M455.5 35.9V45.8M456.5 37.5V48.0M457.5 34.9V45.5M458.5 37.2V47.4M459.5 40.8V48.6M460.5 36.4V45.4M461.5 35.8V48.9M462.5 36.6V48.3M463.5 34.6V45.0M464.5 37.2V44.7M465.5 35.4V46.4M466.5 35.6V44.9M467.5 35.1V46.6M468.5 39.3V44.5M469.5 38.1V46.8M470.5 39.7V43.0M471.5 40.1V47.0M472.5 36.8V45.4M473.5 41.1V48.4M474.5 37.1V44.9M475.5 35.4V47.4M476.5 39.0V42.9M477.5 40.5V43.0M478.5 37.9V47.9M479.5 37.2V45.5M480.5 39.1V46.2M481.5 37.0V45.4M482.5 35.8V47.8M483.5 39.2V45.1M484.5 36.5V42.9M485.5 37.3V47.6M486.5 36.9V47.4M487.5 40.0V44.0M488.5 40.7V43.3M489.5 41.3V42.7M495.5 32.4V51.3M496.5 36.2V45.1M497.5 36.5V45.3M498.5 31.6V46.0M499.5 37.0V52.0M500.5 38.2V48.3M501.5 31.2V49.5M502.5 31.6V48.3M503.5 37.4V43.7M504.5 38.5V50.5M505.5 38.5V46.1M506.5 38.4V47.7M507.5 39.2V50.3M508.5 34.3V45.2M509.5 37.8V45.0M510.5 32.9V49.3M511.5 33.8V43.3M512.5 33.7V42.6M513.5 39.5V42.2M514.5 39.2V45.9M515.5 36.8V43.8M516.5 36.4V44.2M517.5 37.2V45.6M518.5 37.5V46.1M519.5 39.8V42.9M520.5 40.0V44.0M521.5 40.7V43.3M522.5 41.3V42.7M526.5 31.1V43.9M527.5 30.2V52.0M528.5 29.7V49.0M529.5 37.3V51.6M530.5 35.0V49.8M531.5 34.2V49.1M532.5 31.0V51.5M533.5 35.1V50.6M534.5 30.3V48.6M535.5 33.8V43.0M536.5 37.8V44.5M537.5 40.6V44.4M538.5 41.0V48.9M539.5 33.0V44.4M540.5 40.3V44.6M541.5 37.0V44.5M542.5 34.4V50.0M543.5 33.4V44.9M544.5 36.3V46.9M545.5 36.4V49.8M546.5 38.0V46.1M547.5 33.9V49.3M548.5 40.4V47.1M549.5 38.2V46.4M550.5 36.2V43.4M551.5 41.2V44.1M552.5 34.3V47.1M553.5 34.8V42.9M554.5 36.1V44.9M555.5 36.6V44.6M556.5 35.3V44.7M557.5 40.1V46.1M558.5 39.1V45.4M559.5 40.2V43.5M560.5 39.2V44.1M561.5 37.0V45.4M562.5 40.0V44.0M563.5 40.7V43.3M564.5 41.3V42.7M578.5 36.5V51.9M579.5 31.4V49.7M580.5 36.2V50.1M581.5 41.0V48.4M582.5 32.1V49.8M583.5 35.2V52.2M584.5 29.1V49.2M585.5 33.5V51.8M586.5 28.5V51.7M587.5 34.7V51.2M588.5 29.9V49.8M589.5 30.5V49.3M590.5 29.2V45.3M591.5 30.6V50.2M592.5 32.5V48.7M593.5 32.2V48.2M594.5 31.2V47.3M595.5 34.7V47.6M596.5 33.5V48.7M597.5 38.0V49.8M598.5 29.9V47.5M599.5 29.7V46.1M600.5 41.2V43.7M601.5 30.2V51.0M602.5 33.8V49.0M603.5 35.5V49.5M604.5 32.5V48.9M605.5 35.1V49.1M606.5 30.5V48.5M607.5 30.4V47.2M608.5 38.0V46.9M609.5 34.3V44.6M610.5 32.0V51.5M611.5 38.3V46.5M612.5 37.9V45.4M613.5 36.1V51.2M614.5 35.7V49.9M615.5 41.6V46.4M616.5 33.7V45.4M617.5 37.3V48.8M618.5 34.6V47.1M619.5 33.4V44.2M620.5 35.2V49.6M621.5 40.1V42.6M622.5 34.0V46.4M623.5 39.6V49.7M624.5 36.1V46.5M625.5 35.2V49.7M626.5 38.0V43.2M627.5 37.5V49.2M628.5 35.4V49.4M629.5 38.2V46.2M630.5 37.7V48.8M631.5 38.3V44.5M632.5 33.7V45.4M633.5 36.3V45.9M634.5 39.7V48.1M635.5 39.0V45.2M636.5 35.9V45.5M637.5 40.2V45.0M638.5 37.4V47.7M639.5 38.0V47.1M640.5 39.2V47.9M641.5 37.6V43.8M642.5 35.5V46.3M643.5 37.0V44.3M644.5 37.6V45.9M645.5 38.3V46.3M646.5 38.4V43.2M647.5 38.9V46.1M648.5 38.7V45.4M649.5 39.1V44.0M650.5 40.0V44.0M651.5 40.7V43.3M652.5 41.3V42.7M661.5 36.8V47.1M662.5 31.9V50.0M663.5 40.7V48.8M664.5 35.8V48.6M665.5 32.6V46.4M666.5 39.2V49.7M667.5 40.6V43.1M668.5 37.3V46.3M669.5 34.8V44.7M670.5 34.5V45.2M671.5 37.3V42.1M672.5 37.9V43.0M673.5 40.7V44.9M674.5 38.9V48.1M675.5 35.8V45.5M676.5 38.5V43.4M677.5 35.2V46.6M678.5 36.9V45.4M679.5 38.1V45.5M680.5 36.8V42.7M681.5 39.4V45.2M682.5 38.2V43.9M683.5 39.0V43.6M684.5 38.1V45.0M685.5 40.0V44.0M686.5 40.7V43.3M687.5 41.3V42.7M691.5 32.0V50.1M692.5 34.8V54.3M693.5 34.3V53.6M694.5 36.9V52.3M695.5 29.4V53.7M696.5 34.0V47.1M697.5 36.5V52.5M698.5 34.5V50.3M699.5 39.0V42.9M700.5 38.7V52.6M701.5 38.2V50.4M702.5 32.0V42.7M703.5 31.1V54.3M704.5 35.8V45.9M705.5 29.1V48.1M706.5 29.1V54.1M707.5 29.3V52.6M708.5 29.4V48.4M709.5 34.2V53.3M710.5 32.0V51.5M711.5 28.8V54.1M712.5 37.4V48.0M713.5 30.9V46.2M714.5 38.7V43.8M715.5 30.6V42.4M716.5 30.1V49.3M717.5 32.8V49.3M718.5 31.3V52.8M719.5 35.5V49.4M720.5 36.9V44.7M721.5 28.8V53.3M722.5 28.9V50.9M723.5 31.4V50.8M724.5 29.1V49.6M725.5 35.0V52.9M726.5 31.6V49.2M727.5 34.8V50.4M728.5 32.7V48.7M729.5 29.9V50.0M730.5 36.3V44.8M731.5 33.6V50.0M732.5 38.5V49.6M733.5 34.6V44.4M734.5 33.2V51.2M735.5 29.5V51.2M736.5 34.9V45.9M737.5 31.3V45.4M738.5 36.8V48.1M739.5 37.1V47.3M740.5 30.6V50.2M741.5 30.4V52.0M742.5 35.7V51.1M743.5 38.6V47.9M744.5 32.2V43.6M745.5 33.7V51.3M746.5 32.7V46.6M747.5 31.4V49.5M748.5 38.9V51.1M749.5 36.5V50.2M750.5 31.4V49.1M751.5 30.9V42.8M752.5 34.5V51.3M753.5 37.9V50.9M754.5 34.8V45.3M755.5 31.7V49.4M756.5 37.6V51.2M757.5 38.2V47.3M758.5 35.8V47.2M759.5 36.4V42.9M760.5 40.3V45.0M761.5 37.1V48.3M762.5 34.8V51.2M763.5 34.5V50.0M764.5 34.0V49.1M765.5 32.9V50.5M766.5 37.0V49.8M767.5 34.2V46.8M768.5 40.1V46.7M769.5 35.5V46.9M770.5 36.7V44.7M771.5 35.8V47.4M772.5 38.6V43.7M773.5 33.9V48.1M774.5 32.8V48.2M775.5 35.1V50.5M776.5 36.3V49.8M777.5 33.2V45.9M778.5 38.8V45.8M779.5 36.7V45.1M780.5 34.9V45.1M781.5 35.3V43.8M782.5 37.3V44.4M783.5 33.8V48.1M784.5 37.5V48.6M785.5 35.1V46.1M786.5 40.6V47.8M787.5 35.7V45.4M788.5 33.9V47.4M789.5 35.7V48.2M790.5 39.3V44.3M791.5 34.7V46.4M792.5 36.3V47.6M793.5 35.2V45.2M794.5 35.1V45.5M795.5 37.1V45.3M796.5 39.7V42.4M797.5 35.4V45.7M798.5 35.5V43.6M799.5 40.6V46.4M800.5 34.8V45.6M801.5 35.8V48.2M802.5 35.7V44.8M803.5 36.5V45.4M804.5 38.4V48.0M805.5 40.6V46.8M806.5 40.7V46.4M807.5 35.4V46.6M808.5 39.0V45.6M809.5 36.3V46.5M810.5 39.4V46.2M811.5 36.0V44.6M812.5 39.0V44.9M813.5 39.9V46.5M814.5 37.5V47.1M815.5 38.7V46.7M816.5 36.5V47.3M817.5 40.0V44.0M818.5 40.7V43.3M819.5 41.3V42.7M825.5 38.2V55.0M826.5 37.4V53.0M827.5 30.7V45.1M828.5 30.4V54.2M829.5 36.1V53.4M830.5 32.6V47.4M831.5 40.7V54.9M832.5 38.1V50.4M833.5 37.0V52.3M834.5 32.8V45.5M835.5 28.8V48.8M836.5 29.1V52.6M837.5 35.8V44.6M838.5 34.0V50.9M839.5 31.1V51.8M840.5 31.1V54.4M841.5 34.2V48.3M842.5 34.4V49.0M843.5 28.6V42.5M844.5 36.1V51.2M845.5 37.0V45.4M846.5 29.5V44.0M847.5 31.9V50.5M848.5 41.8V52.2M849.5 32.5V54.0M850.5 31.1V48.7M851.5 33.2V50.9M852.5 32.3V50.2M853.5 36.2V53.1M854.5 33.4V49.5M855.5 29.9V50.0M856.5 30.9V46.9M857.5 34.2V50.8M858.5 30.6V43.7M859.5 31.1V45.2M860.5 38.9V48.1M861.5 34.4V44.6M862.5 32.3V48.9M863.5 31.8V45.6M864.5 33.9V46.7M865.5 35.3V43.0M866.5 39.9V45.9M867.5 36.0V46.6M868.5 33.1V51.8M869.5 31.9V50.0M870.5 35.0V47.8M871.5 35.3V50.1M872.5 35.6V49.5M873.5 31.0V50.5M874.5 36.3V44.1M875.5 34.5V48.7M876.5 40.8V49.4M877.5 32.2V47.9M878.5 35.4V48.5M879.5 33.6V50.3M880.5 33.6V48.9M881.5 39.1V45.9M882.5 39.3V44.3M883.5 40.2V49.6M884.5 40.2V49.6M885.5 31.8V50.3M886.5 36.8V48.3M887.5 37.4V46.1M888.5 32.9V48.4M889.5 40.3V46.5M890.5 33.1V46.0M891.5 35.3V46.9M892.5 35.1V46.8M893.5 33.0V48.2M894.5 35.6V47.1M895.5 37.7V49.5M896.5 33.9V48.2M897.5 36.4V49.8M898.5 35.1V43.4M899.5 35.5V44.9M900.5 34.3V47.4M901.5 37.8V45.2M902.5 33.8V45.1M903.5 34.6V49.6M904.5 38.3V49.3M905.5 40.5V48.2M906.5 38.0V45.2M907.5 36.2V44.4M908.5 34.7V44.4M909.5 37.5V42.9M910.5 38.8V47.0M911.5 35.6V46.3M912.5 35.2V44.0M913.5 34.7V46.8M914.5 35.7V46.5M915.5 37.2V48.2M916.5 40.3V44.1M917.5 35.5V44.7M918.5 36.8V48.4M919.5 36.6V43.1M920.5 39.0V47.3M921.5 38.7V43.3M922.5 37.3V47.3M923.5 41.1V46.1M924.5 40.1V46.3M925.5 37.0V44.0M926.5 38.8V47.2M927.5 40.0V43.4M928.5 38.0V45.8M929.5 40.0V45.8M930.5 39.8V45.1M931.5 40.0V44.0M932.5 40.7V43.3M933.5 41.3V42.7" stroke="#3f4585" stroke-opacity="0.3" stroke-width="1" fill="none"/><path d="M0 42.5H931" stroke="#464a78" stroke-width="1.1"/></svg></div>
<svg class="abs" style="left:241px;top:452px" width="8" height="10"><path d="M2.5 1.5L5.5 5L2.5 8.5" stroke="#1a1a1a" stroke-width="1.1" fill="#fff" stroke-linecap="round"/></svg>
<div class="th" style="top:544px;height:86px">
<div class="name">Vocals</div><div class="chev"></div>
<div class="btn rec">R</div>
<div class="knob pan"></div><div class="tick" style="left:65px;top:46px"></div>
<div class="lab" style="left:50.5px;top:70px">L</div><div class="lab" style="left:79.5px;top:70px">R</div>
<div class="knob vol"></div><div class="tick" style="left:118px;top:55px;transform:rotate(70deg)"></div>
<div class="lab" style="left:121px;top:70px">Vol</div>
<div class="btn s">S</div><div class="btn m">M</div>
</div>
<div class="sep" style="top:630px;height:3px"></div><div class="abs" style="left:243px;top:629px;width:931px;height:4px;background:#e0e0e0;border-top:1px solid #eef1ee;border-bottom:1px solid #eef1ee"></div>
<svg class="abs" style="left:242px;top:540px" width="932" height="89"><path d="M1 9 L4.5 5 H932 V89 H7 Q1 89 1 83 Z" fill="#8bbdee"/></svg>
<div class="clip" style="top:545px;background:transparent"><svg class="notes" width="931" height="84"><path d="M10.5 35.9V50.9M11.5 36.1V50.5M12.5 35.7V51.0M13.5 33.5V54.3M14.5 34.8V52.4M15.5 33.4V54.4M16.5 36.5V49.9M17.5 33.2V54.7M18.5 34.8V52.3M19.5 33.8V53.9M20.5 34.5V52.8M21.5 34.1V53.4M22.5 35.8V51.0M23.5 33.9V53.7M24.5 36.0V50.6M25.5 35.6V51.2M26.5 36.5V50.0M27.5 35.2V51.8M28.5 34.7V52.5M29.5 35.5V51.3M30.5 33.4V54.4M31.5 36.3V50.2M32.5 34.5V52.8M33.5 35.8V51.0M41.1 39.9V46.2M42.1 39.8V46.5M43.1 39.9V46.2M44.1 40.6V44.9M45.1 40.4V45.1M46.1 40.2V45.7M47.1 39.9V46.2M48.1 40.7V44.5M49.1 40.3V45.4M50.1 40.3V45.4M51.1 40.3V45.5M52.1 40.7V44.7M53.1 40.4V45.2M54.1 40.7V44.6M55.1 40.4V45.1M56.1 41.1V43.9M57.1 40.5V44.9M58.1 40.9V44.2M59.1 41.0V44.1M60.1 41.2V43.7M61.1 41.1V43.7M62.1 40.9V44.1M63.1 41.0V43.9M64.1 41.3V43.4M84.1 36.1V49.4M85.1 36.8V48.6M86.1 36.6V48.8M87.1 36.5V48.9M88.1 36.1V49.3M89.1 34.1V51.9M90.1 34.0V52.0M91.1 34.7V51.2M92.1 35.7V49.9M93.1 35.6V50.0M94.1 34.7V51.1M95.1 34.3V51.6M96.1 34.8V51.0M97.1 35.2V50.5M98.1 36.6V48.8M99.1 35.2V50.5M100.1 34.5V51.4M101.1 34.7V51.1M102.1 36.9V48.4M103.1 34.9V50.9M104.1 36.1V49.4M105.1 36.7V48.6M106.1 34.1V51.9M106.5 40.3V43.7M107.5 40.2V43.8M108.5 40.7V43.3M109.5 40.1V43.9M110.5 40.1V43.9M111.5 40.1V43.9M111.1 32.1V56.4M112.1 31.9V56.6M113.1 32.3V56.2M114.1 33.3V54.6M115.1 34.1V53.4M116.1 32.8V55.4M117.1 33.1V54.9M118.1 33.0V55.1M119.1 35.3V51.7M120.1 33.1V55.0M121.1 34.8V52.5M122.1 33.5V54.3M123.1 36.5V49.9M124.1 33.9V53.8M125.1 34.7V52.7M126.1 36.5V50.0M127.1 34.9V52.3M128.1 36.9V49.4M129.1 37.1V49.1M130.1 36.6V49.9M131.1 37.3V48.8M132.1 36.8V49.6M133.1 35.9V50.8M134.1 36.7V49.8M135.1 36.8V49.6M136.1 37.7V48.2M137.1 37.0V49.3M138.1 37.2V49.0M139.1 37.6V48.4M139.5 40.0V44.0M140.5 40.3V43.7M141.5 40.7V43.3M142.5 41.0V43.0M143.5 40.8V43.2M144.5 40.8V43.2M145.5 41.2V42.8M146.5 41.2V42.8M160.8 34.5V54.1M161.8 34.7V53.9M162.8 37.2V49.8M163.8 35.6V52.3M164.8 37.1V49.9M165.8 36.8V50.4M166.8 34.6V54.0M167.8 35.9V52.0M168.8 35.3V52.9M169.8 35.7V52.2M170.8 36.1V51.5M171.8 36.5V50.9M172.8 36.1V51.6M173.8 34.5V54.2M174.8 35.2V53.0M175.8 36.3V51.3M176.8 36.9V50.3M177.8 36.3V51.2M178.8 35.0V53.4M179.8 35.8V52.1M180.8 35.1V53.2M181.8 34.6V54.0M182.8 36.8V50.4M183.8 35.0V53.4M184.8 37.1V50.0M185.8 34.6V54.1M194.7 35.9V52.8M195.7 35.7V53.2M196.7 33.3V57.4M197.7 35.5V53.6M198.7 36.0V52.6M199.7 33.8V56.5M200.7 34.9V54.7M201.7 34.0V56.2M202.7 35.7V53.1M203.7 35.5V53.6M204.7 34.1V56.1M205.7 35.6V53.4M206.7 34.1V56.0M207.7 36.7V51.4M208.7 34.8V54.8M209.7 36.9V51.0M210.7 35.9V52.9M211.7 37.5V49.9M212.7 37.1V50.8M213.7 34.9V54.6M214.7 36.4V52.0M215.7 35.5V53.6M216.7 37.1V50.7M217.7 36.9V51.1M218.7 37.6V49.7M219.7 36.5V51.8M220.7 35.7V53.1M221.7 36.7V51.4M222.7 37.2V50.6M223.7 35.8V53.0M224.7 36.0V52.6M225.7 36.7V51.5M226.7 38.2V48.8M227.7 36.9V51.0M228.7 37.4V50.1M229.7 36.3V52.1M230.7 37.8V49.6M231.7 37.1V50.6M232.7 37.3V50.4M233.7 37.9V49.2M234.7 37.7V49.7M235.7 37.4V50.1M236.7 37.0V50.8M237.7 38.0V49.2M238.7 38.3V48.6M239.7 37.2V50.6M240.7 39.0V47.3M241.7 37.6V49.8M242.7 38.0V49.2M243.7 38.3V48.6M244.7 38.6V48.1M245.7 38.1V48.9M246.7 37.9V49.2M247.7 38.3V48.6M248.7 38.3V48.5M248.4 36.5V51.2M249.4 35.4V53.0M250.4 36.1V51.8M251.4 33.2V56.7M252.4 33.4V56.3M253.4 36.1V51.9M254.4 34.5V54.5M255.4 34.5V54.5M256.4 36.4V51.3M257.4 35.2V53.4M258.4 33.9V55.5M259.4 34.3V54.8M260.4 35.6V52.7M261.4 33.9V55.6M262.4 35.6V52.7M263.4 34.6V54.3M264.4 35.1V53.5M265.4 33.1V56.9M266.4 34.3V54.9M267.4 33.7V55.8M268.4 34.2V55.1M269.4 35.2V53.3M270.4 33.1V56.8M271.4 34.0V55.3M272.4 34.1V55.1M273.4 35.6V52.7M274.4 36.0V52.0M282.0 35.4V52.0M283.0 34.6V53.2M284.0 41.3V43.1M285.0 41.4V42.9M286.0 36.8V49.9M287.0 38.5V47.3M288.0 41.2V43.1M289.0 41.5V42.8M290.0 34.8V52.7M291.0 41.5V42.8M292.0 41.4V42.9M293.0 37.0V49.5M294.0 38.8V46.7M295.0 41.4V42.9M296.0 41.2V43.2M297.0 34.1V53.8M298.0 39.0V46.5M299.0 41.4V42.9M300.0 34.2V53.7M301.0 36.6V50.1M302.0 41.4V42.9M303.0 41.4V42.9M304.0 36.9V49.7M305.0 38.9V46.6M306.0 41.4V42.9M307.0 41.4V42.9M308.0 34.1V53.8M309.0 41.4V42.8M310.0 41.5V42.8M311.0 34.3V53.6M312.0 38.6V47.1M313.0 41.3V43.1M314.0 41.3V43.0M315.0 34.7V52.9M316.0 38.8V46.8M331.2 33.4V51.9M332.2 30.6V55.1M333.2 32.4V53.0M334.2 32.3V53.1M335.2 32.2V53.3M336.2 32.2V53.3M337.2 34.6V50.6M338.2 34.5V50.6M339.2 32.7V52.7M340.2 34.6V50.6M341.2 35.8V49.2M342.2 34.9V50.2M343.2 36.5V48.4M344.2 35.2V49.8M345.2 37.7V47.0M346.2 35.9V49.1M347.2 36.9V47.9M348.2 37.7V46.9M349.2 36.8V48.0M350.2 38.5V46.0M351.2 38.9V45.6M352.2 39.5V44.9M353.2 39.0V45.4M354.2 39.1V45.3M355.2 39.6V44.8M356.2 40.2V44.1M371.8 36.1V49.7M372.8 35.8V50.0M373.8 33.7V52.8M374.8 34.2V52.2M375.8 34.8V51.4M376.8 35.6V50.3M377.8 35.3V50.8M378.8 37.2V48.2M379.8 34.6V51.6M380.8 35.4V50.6M381.8 36.1V49.7M382.8 37.7V47.6M383.8 36.3V49.4M384.8 34.5V51.8M385.8 36.2V49.6M386.8 36.6V49.0M387.8 34.2V52.1M388.8 36.4V49.2M389.8 35.0V51.1M390.8 35.2V50.9M391.8 34.4V51.9M392.8 35.0V51.1M393.8 36.6V49.0M394.8 35.3V50.8M395.8 36.8V48.7M396.8 37.5V47.9M397.8 36.4V49.3M398.8 38.0V47.2M399.8 37.4V48.0M400.8 34.4V51.9M401.8 36.6V49.0M402.8 37.2V48.3M403.8 38.4V46.6M404.8 37.5V47.9M405.8 38.4V46.6M414.8 32.7V53.7M415.8 32.3V54.1M416.8 31.3V55.3M417.8 35.0V50.7M418.8 31.7V54.9M419.8 35.0V50.7M420.8 34.7V51.2M421.8 33.1V53.1M422.8 34.5V51.4M423.8 34.7V51.1M424.8 34.0V52.1M425.8 35.5V50.2M426.8 33.5V52.6M427.8 35.8V49.7M428.8 33.4V52.8M429.8 33.3V52.9M430.8 34.1V51.8M431.8 36.0V49.6M432.8 32.8V53.5M433.8 35.7V49.9M434.8 33.5V52.6M435.8 33.7V52.4M436.8 35.1V50.6M437.8 32.4V54.0M438.8 31.8V54.8M439.8 32.2V54.2M440.8 32.9V53.3M446.8 35.3V52.8M447.8 35.5V52.4M448.8 33.0V56.4M449.8 35.0V53.2M450.8 36.0V51.6M451.8 37.1V49.9M452.8 35.6V52.3M453.8 35.6V52.3M454.8 37.4V49.3M455.8 37.1V49.9M456.8 36.6V50.7M457.8 36.4V50.9M458.8 36.7V50.4M459.8 37.8V48.7M460.8 35.8V52.0M461.8 34.5V54.1M462.8 34.1V54.7M463.8 35.5V52.4M464.8 38.5V47.6M465.8 37.4V49.4M466.5 41.1V42.9M467.5 41.1V42.9M468.5 41.3V42.7M469.5 41.3V42.7M470.5 41.3V42.7M471.5 41.1V42.9M472.5 41.0V43.0M473.5 41.3V42.7M474.5 41.4V42.6M475.5 41.3V42.7M476.5 41.3V42.7M477.5 41.0V43.0M478.5 41.1V42.9M479.5 41.2V42.8M480.5 41.4V42.6M481.5 41.4V42.6M482.5 41.3V42.7M483.5 41.1V42.9M484.5 41.2V42.8M485.5 41.0V43.0M486.5 41.0V43.0M487.5 41.1V42.9M488.5 41.2V42.8M489.5 41.1V42.9M490.5 41.3V42.7M491.5 41.4V42.6M492.5 41.2V42.8M493.5 41.2V42.8M494.5 41.3V42.7M495.5 41.3V42.7M496.5 41.4V42.6M497.5 41.0V43.0M498.5 41.1V42.9M499.5 41.0V43.0M501.5 33.1V53.9M502.5 35.0V51.3M503.5 34.0V52.7M504.5 35.2V51.0M505.5 33.7V53.1M506.5 33.6V53.2M507.5 36.1V49.8M508.5 36.6V49.3M509.5 35.8V50.2M510.5 34.5V52.0M511.5 35.2V51.0M512.5 36.6V49.2M513.5 33.6V53.2M514.5 33.8V53.0M515.5 34.9V51.4M516.5 36.4V49.4M517.5 33.4V53.5M518.5 34.7V51.8M519.5 36.3V49.5M520.5 35.4V50.8M526.2 36.9V51.3M527.2 36.4V52.3M528.2 37.4V50.4M529.2 37.1V50.9M530.2 38.2V49.0M531.2 38.2V49.0M532.2 36.8V51.5M533.2 38.0V49.3M534.2 38.7V48.1M535.2 37.8V49.7M536.2 38.8V47.9M537.2 38.7V48.0M538.2 38.3V48.8M539.2 38.1V49.1M540.2 38.1V49.1M541.2 38.1V49.2M542.2 38.7V48.1M543.2 39.4V46.8M544.2 38.3V48.7M545.2 39.5V46.6M546.2 38.9V47.6M547.2 39.1V47.3M548.2 38.8V47.9M549.2 38.8V47.8M550.2 39.6V46.4M551.2 39.1V47.3M552.2 39.1V47.2M553.2 39.5V46.6M554.2 40.0V45.7M555.2 39.2V47.2M556.2 39.6V46.4M557.2 40.3V45.1M557.5 41.3V42.7M558.5 41.0V43.0M559.5 41.3V42.7M560.5 41.2V42.8M561.5 41.1V42.9M562.5 41.1V42.9M563.5 41.1V42.9M564.5 41.1V42.9M565.5 41.4V42.6M566.5 41.4V42.6M567.5 41.0V43.0M568.5 41.1V42.9M569.5 41.4V42.6M570.5 41.4V42.6M571.5 41.3V42.7M572.5 41.0V43.0M573.5 41.3V42.7M574.5 41.1V42.9M575.5 41.0V43.0M576.5 41.1V42.9M577.9 35.2V48.8M578.9 37.1V46.9M579.9 37.4V46.6M580.9 37.7V46.3M581.9 35.7V48.3M582.9 37.5V46.5M583.9 35.1V48.9M584.9 35.8V48.2M585.9 37.3V46.7M586.9 35.5V48.5M587.9 37.3V46.7M588.9 36.4V47.6M589.9 37.5V46.5M590.9 35.6V48.4M591.9 35.3V48.7M592.9 35.2V48.8M593.9 37.8V46.2M594.9 35.4V48.6M595.9 36.2V47.8M596.9 35.5V48.5M597.9 36.4V47.6M598.9 36.1V47.9M599.9 36.1V47.9M600.9 35.6V48.4M601.5 41.1V42.9M602.5 41.1V42.9M603.5 40.8V43.2M604.5 40.9V43.1M605.5 40.9V43.1M606.5 41.1V42.9M607.5 40.7V43.3M608.5 41.1V42.9M610.0 35.5V52.3M611.0 35.5V52.2M612.0 41.5V42.9M613.0 41.5V42.7M614.0 36.0V51.5M615.0 39.4V46.1M616.0 41.5V42.8M617.0 41.5V42.7M618.0 35.1V52.9M619.0 41.4V42.9M620.0 41.5V42.8M621.0 37.5V49.0M622.0 38.6V47.4M623.0 41.3V43.0M624.0 41.3V43.0M625.0 37.5V49.0M626.0 39.1V46.5M627.0 41.5V42.8M628.0 35.7V52.0M629.0 37.4V49.3M630.0 41.4V42.9M631.0 41.3V43.1M632.0 35.6V52.0M633.0 39.7V45.6M634.0 41.6V42.7M635.0 41.5V42.7M636.0 35.9V51.6M637.0 41.4V42.9M638.0 41.4V42.9M639.0 36.5V50.6M640.0 39.1V46.6M660.7 35.2V50.4M661.7 35.1V50.6M662.7 34.3V51.7M663.7 34.9V50.9M664.7 34.7V51.2M665.7 34.3V51.7M666.7 34.5V51.3M667.7 34.9V50.9M668.7 37.1V48.1M669.7 35.0V50.7M670.7 34.5V51.4M671.7 35.8V49.7M672.7 34.4V51.5M673.7 36.6V48.7M674.7 34.2V51.8M675.7 35.8V49.8M676.7 34.9V50.8M677.7 36.4V49.0M678.7 36.2V49.2M679.7 36.1V49.4M680.7 36.2V49.3M681.7 36.9V48.4M682.7 35.8V49.8M690.0 36.0V51.9M691.0 36.9V50.5M692.0 36.4V51.4M693.0 36.9V50.6M694.0 36.8V50.7M695.0 36.5V51.1M696.0 37.2V50.1M697.0 38.3V48.2M698.0 38.4V48.0M699.0 38.1V48.4M700.0 39.0V47.0M701.0 38.7V47.6M702.0 37.5V49.5M703.0 37.5V49.5M704.0 38.7V47.5M705.0 38.0V48.7M706.0 38.1V48.5M707.0 38.0V48.7M708.0 38.2V48.3M709.0 38.8V47.4M710.0 39.5V46.2M711.0 38.5V47.9M712.0 39.3V46.4M713.0 39.0V47.1M714.0 39.4V46.3M715.0 39.3V46.6M716.0 38.8V47.3M717.0 39.9V45.5M718.0 39.5V46.1M719.0 39.5V46.2M720.0 39.7V45.8M721.0 39.3V46.4M721.2 40.9V43.1M722.2 40.6V43.4M723.2 40.7V43.3M724.2 40.5V43.5M725.2 41.0V43.0M726.2 41.0V43.0M727.2 40.9V43.1M728.2 40.6V43.4M729.2 41.1V42.9M730.2 40.9V43.1M731.2 40.7V43.3M732.2 40.5V43.5M733.2 41.0V43.0M734.2 40.8V43.2M735.2 40.7V43.3M736.2 40.7V43.3M737.2 40.7V43.3M738.2 40.6V43.4M739.2 41.0V43.0M739.5 38.5V44.1M740.5 39.0V43.8M741.5 37.8V44.5M742.5 38.8V43.9M743.5 38.8V43.9M744.5 37.7V44.6M745.5 38.4V44.2M746.5 38.5V44.1M747.5 38.6V44.1M748.5 38.7V44.0M749.5 38.7V44.0M750.5 39.4V43.6M751.5 39.8V43.3M752.5 39.9V43.3M753.5 40.0V43.2M754.5 39.7V43.4M755.5 40.0V43.2M756.5 40.1V43.1M757.5 39.8V43.3M758.5 39.4V43.6M759.5 39.8V43.3M760.5 40.3V43.0M761.5 40.0V43.2M762.5 40.6V42.9M775.5 37.5V48.4M776.5 37.0V49.2M777.5 41.5V42.8M778.5 41.4V42.9M779.5 36.6V49.8M780.5 38.6V46.9M781.5 41.6V42.6M782.5 41.3V43.0M783.5 36.8V49.4M784.5 41.3V42.9M785.5 41.6V42.6M786.5 35.5V51.3M787.5 39.3V45.8M788.5 41.3V42.9M789.5 41.4V42.9M790.5 35.9V50.7M791.5 39.3V45.9M792.5 41.6V42.6M793.5 37.3V48.8M794.5 35.3V51.6M795.5 41.5V42.7M796.5 41.4V42.9M797.5 36.2V50.3M798.5 38.7V46.8M799.5 41.5V42.7M800.5 41.5V42.7M801.5 37.5V48.4M802.5 41.3V43.0M821.5 36.7V51.0M822.5 36.1V52.1M823.5 36.4V51.6M824.5 37.4V49.8M825.5 38.0V48.9M826.5 38.2V48.6M827.5 36.2V52.0M828.5 38.0V48.8M829.5 36.1V52.0M830.5 37.7V49.4M831.5 37.0V50.6M832.5 38.4V48.2M833.5 37.0V50.5M834.5 38.3V48.3M835.5 38.0V48.9M836.5 37.6V49.6M837.5 38.4V48.2M838.5 38.0V48.9M839.5 36.6V51.3M840.5 37.7V49.4M841.5 37.4V49.9M842.5 36.3V51.8M843.5 37.6V49.6M844.5 37.6V49.6M845.5 37.4V49.9M846.5 36.9V50.8M847.5 36.8V50.9M909.2 35.2V50.8M910.2 36.2V49.6M911.2 34.1V52.3M912.2 37.9V47.4M913.2 37.2V48.3M914.2 35.4V50.6M915.2 38.1V47.1M916.2 37.0V48.5M917.2 37.0V48.5M918.2 38.3V46.9M919.2 36.7V48.9M920.2 34.8V51.4M921.2 38.1V47.0M922.2 35.5V50.5M923.2 33.8V52.6M924.2 36.7V48.8M925.2 35.2V50.8M926.2 38.1V47.1M927.2 36.6V49.1M928.2 38.3V46.8M929.2 35.8V50.1M930.2 37.4V47.9M931.2 37.4V47.9" stroke="#44658c" stroke-opacity="0.44" stroke-width="1" fill="none"/><path d="M160.8 28.0V54.6M282.0 29.0V53.7M331.2 21.0V60.9M371.8 27.0V55.5M446.8 8.0V72.6M526.2 32.0V51.0M610.0 29.0V53.7M690.0 29.0V53.7M739.5 34.0V49.2" stroke="#44658c" stroke-opacity="0.7" stroke-width="1" fill="none"/><path d="M0 42.5H931" stroke="#3f5470" stroke-width="1.1"/></svg></div>
<svg class="abs" style="left:241px;top:540px" width="8" height="10"><path d="M2.5 1.5L5.5 5L2.5 8.5" stroke="#1a1a1a" stroke-width="1.1" fill="#fff" stroke-linecap="round"/></svg>

<svg class="abs" style="left:23px;top:632px" width="220" height="88" fill="#c8c8c8"><rect x="0" y="0" width="11" height="6"/><rect x="0" y="82" width="11" height="6"/><rect x="29" y="0" width="18" height="6"/><rect x="29" y="82" width="18" height="6"/><rect x="65" y="0" width="18" height="6"/><rect x="65" y="82" width="18" height="6"/><rect x="101" y="0" width="18" height="6"/><rect x="101" y="82" width="18" height="6"/><rect x="137" y="0" width="18" height="6"/><rect x="137" y="82" width="18" height="6"/><rect x="173" y="0" width="18" height="6"/><rect x="173" y="82" width="18" height="6"/><rect x="209" y="0" width="11" height="6"/><rect x="209" y="82" width="11" height="6"/><rect x="0" y="0" width="6" height="17"/><rect x="214" y="0" width="6" height="17"/><rect x="0" y="35" width="6" height="18"/><rect x="214" y="35" width="6" height="18"/><rect x="0" y="71" width="6" height="17"/><rect x="214" y="71" width="6" height="17"/></svg><div class="abs" id="addt">Add track</div>

<svg class="abs" id="ruler" width="915" height="34"><path d="M0 32.5H915" stroke="#c4c4c4" stroke-width="1"/><path d="M0.5 21V32" stroke="#8c8c8c" stroke-width="1.3"/><text x="3.8" y="25" font-family="Liberation Sans" font-size="12" fill="#8c8c8c">1</text><path d="M20.4 27V32" stroke="#8c8c8c" stroke-width="1.2"/><path d="M40.2 27V32" stroke="#8c8c8c" stroke-width="1.2"/><path d="M60.1 27V32" stroke="#8c8c8c" stroke-width="1.2"/><path d="M80.0 21V32" stroke="#8c8c8c" stroke-width="1.3"/><text x="83.3" y="25" font-family="Liberation Sans" font-size="12" fill="#8c8c8c">2</text><path d="M99.9 27V32" stroke="#8c8c8c" stroke-width="1.2"/><path d="M119.8 27V32" stroke="#8c8c8c" stroke-width="1.2"/><path d="M139.6 27V32" stroke="#8c8c8c" stroke-width="1.2"/><path d="M159.5 21V32" stroke="#8c8c8c" stroke-width="1.3"/><text x="162.8" y="25" font-family="Liberation Sans" font-size="12" fill="#8c8c8c">3</text><path d="M179.4 27V32" stroke="#8c8c8c" stroke-width="1.2"/><path d="M199.2 27V32" stroke="#8c8c8c" stroke-width="1.2"/><path d="M219.1 27V32" stroke="#8c8c8c" stroke-width="1.2"/><path d="M239.0 21V32" stroke="#8c8c8c" stroke-width="1.3"/><text x="242.3" y="25" font-family="Liberation Sans" font-size="12" fill="#8c8c8c">4</text><path d="M258.9 27V32" stroke="#8c8c8c" stroke-width="1.2"/><path d="M278.8 27V32" stroke="#8c8c8c" stroke-width="1.2"/><path d="M298.6 27V32" stroke="#8c8c8c" stroke-width="1.2"/><path d="M318.5 21V32" stroke="#8c8c8c" stroke-width="1.3"/><text x="321.8" y="25" font-family="Liberation Sans" font-size="12" fill="#8c8c8c">5</text><path d="M338.4 27V32" stroke="#8c8c8c" stroke-width="1.2"/><path d="M358.2 27V32" stroke="#8c8c8c" stroke-width="1.2"/><path d="M378.1 27V32" stroke="#8c8c8c" stroke-width="1.2"/><path d="M398.0 21V32" stroke="#8c8c8c" stroke-width="1.3"/><text x="401.3" y="25" font-family="Liberation Sans" font-size="12" fill="#8c8c8c">6</text><path d="M417.9 27V32" stroke="#8c8c8c" stroke-width="1.2"/><path d="M437.8 27V32" stroke="#8c8c8c" stroke-width="1.2"/><path d="M457.6 27V32" stroke="#8c8c8c" stroke-width="1.2"/><path d="M477.5 21V32" stroke="#8c8c8c" stroke-width="1.3"/><text x="480.8" y="25" font-family="Liberation Sans" font-size="12" fill="#8c8c8c">7</text><path d="M497.4 27V32" stroke="#8c8c8c" stroke-width="1.2"/><path d="M517.2 27V32" stroke="#8c8c8c" stroke-width="1.2"/><path d="M537.1 27V32" stroke="#8c8c8c" stroke-width="1.2"/><path d="M557.0 21V32" stroke="#8c8c8c" stroke-width="1.3"/><text x="560.3" y="25" font-family="Liberation Sans" font-size="12" fill="#8c8c8c">8</text><path d="M576.9 27V32" stroke="#8c8c8c" stroke-width="1.2"/><path d="M596.8 27V32" stroke="#8c8c8c" stroke-width="1.2"/><path d="M616.6 27V32" stroke="#8c8c8c" stroke-width="1.2"/><path d="M636.5 21V32" stroke="#8c8c8c" stroke-width="1.3"/><text x="639.8" y="25" font-family="Liberation Sans" font-size="12" fill="#8c8c8c">9</text><path d="M656.4 27V32" stroke="#8c8c8c" stroke-width="1.2"/><path d="M676.2 27V32" stroke="#8c8c8c" stroke-width="1.2"/><path d="M696.1 27V32" stroke="#8c8c8c" stroke-width="1.2"/><path d="M716.0 21V32" stroke="#8c8c8c" stroke-width="1.3"/><text x="719.3" y="25" font-family="Liberation Sans" font-size="12" fill="#8c8c8c">10</text><path d="M735.9 27V32" stroke="#8c8c8c" stroke-width="1.2"/><path d="M755.8 27V32" stroke="#8c8c8c" stroke-width="1.2"/><path d="M775.6 27V32" stroke="#8c8c8c" stroke-width="1.2"/><path d="M795.5 21V32" stroke="#8c8c8c" stroke-width="1.3"/><text x="798.8" y="25" font-family="Liberation Sans" font-size="12" fill="#8c8c8c">11</text><path d="M815.4 27V32" stroke="#8c8c8c" stroke-width="1.2"/><path d="M835.2 27V32" stroke="#8c8c8c" stroke-width="1.2"/><path d="M855.1 27V32" stroke="#8c8c8c" stroke-width="1.2"/><path d="M875.0 21V32" stroke="#8c8c8c" stroke-width="1.3"/><text x="878.3" y="25" font-family="Liberation Sans" font-size="12" fill="#8c8c8c">12</text><path d="M894.9 27V32" stroke="#8c8c8c" stroke-width="1.2"/><path d="M914.8 27V32" stroke="#8c8c8c" stroke-width="1.2"/></svg>
<div class="abs" id="star"><span>*</span></div>

<div class="abs" id="collab"><div class="c"></div><div class="v">COLLABORATE</div></div>

<div class="abs" id="sbar"></div>
<div class="abs" id="thumb"></div>
<div class="zb" style="left:1122px">-</div>
<div class="zb" style="left:1149px">+</div>

<div class="abs" id="playline"></div>
<svg class="abs" id="phead" width="15" height="12"><path d="M0.5 0.5H13.5V5.5L7 11L0.5 5.5Z" fill="#fff" stroke="#8a8a8a" stroke-width="1"/><rect x="6.5" y="0.5" width="1" height="1" fill="#d42bbf"/></svg>

<div class="abs" id="footer"></div>
<div class="tb" style="left:279px"><div style="position:absolute;left:21px;top:11px;width:19px;height:19px;border-radius:50%;background:#fb6161"></div></div>
<div class="tb" style="left:350px"><div style="position:absolute;left:21px;top:11px;width:19px;height:19px;background:#222"></div></div>
<div class="tb" style="left:421px"><svg style="position:absolute;left:15px;top:11px" width="30" height="20"><path d="M0 10L13 0V20Z M14 10L27 0V20Z" fill="#222"/></svg></div>
<div class="tb" style="left:492px"><svg style="position:absolute;left:25px;top:11px" width="14" height="20"><path d="M0.5 0L13 10L0.5 20Z" fill="#222"/></svg></div>
<div class="tb" style="left:563px"><svg style="position:absolute;left:17px;top:11px" width="30" height="20"><path d="M1 0L14 10L1 20Z M15 0L28 10L15 20Z" fill="#222"/></svg></div>
<div class="abs" id="time">00:03.1</div>
<svg class="abs" style="left:833px;top:820px" width="25" height="25"><path d="M10 3H15.2L22.6 22.2H2.4Z" fill="#e000b8" stroke="#111" stroke-width="1.6" stroke-linejoin="round"/><path d="M2.6 4.2L12.6 18.2" stroke="#111" stroke-width="1.3" stroke-linecap="round"/></svg>
<div class="abs" id="bpm">120 BPM</div>
<div class="abs" id="feedback">Feedback</div>

<div class="abs" id="lb"></div>
<div class="abs" id="rb"></div>
<div class="abs" id="bb"></div>
</body></html>
